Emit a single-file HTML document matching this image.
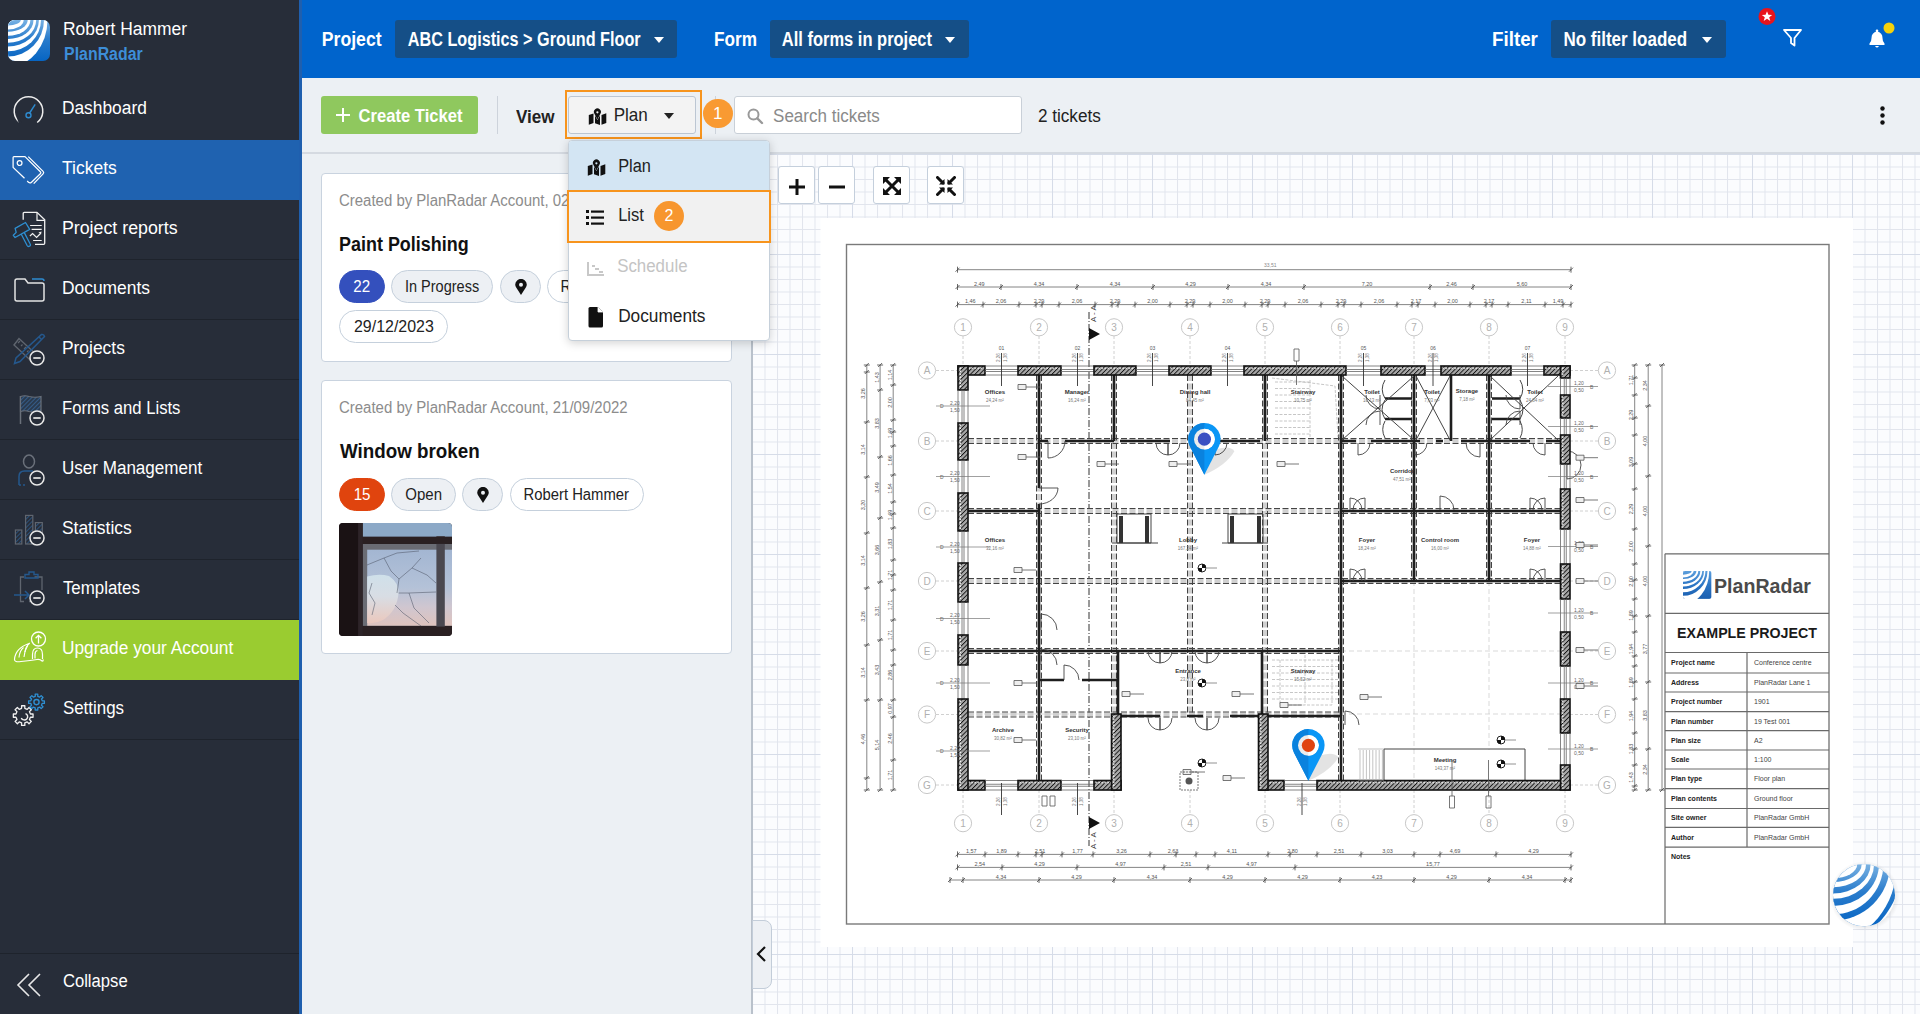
<!DOCTYPE html>
<html><head><meta charset="utf-8">
<style>
*{box-sizing:border-box;margin:0;padding:0}
html,body{width:1920px;height:1014px;overflow:hidden;font-family:"Liberation Sans",sans-serif;background:#ecf0f4}
.abs{position:absolute}
#sb{position:absolute;left:0;top:0;width:299px;height:1014px;background:#272d39}
#sbline{position:absolute;left:299px;top:0;width:3px;height:1014px;background:#1f5fae}
.item{position:absolute;left:0;width:299px;height:60px;border-bottom:1px solid #1e232c;color:#fff;font-size:18px}
.item .t{position:absolute;left:62px;top:18px;white-space:nowrap}
.item svg{position:absolute;left:10px;top:10px}
#top{position:absolute;left:302px;top:0;width:1618px;height:78px;background:#0064cc}
.tl{position:absolute;color:#fff;font-weight:bold;font-size:20px;white-space:nowrap}
.dd{position:absolute;top:20px;height:38px;background:#154f87;border-radius:3px;color:#fff;font-weight:bold;font-size:20px;white-space:nowrap}
.caret{position:absolute;width:0;height:0;border-left:5.5px solid transparent;border-right:5.5px solid transparent;border-top:6px solid #fff}
#tb{position:absolute;left:302px;top:78px;width:1618px;height:76px;background:#ecf0f4;border-bottom:2px solid #d5dae1}
#left{position:absolute;left:302px;top:154px;width:450px;height:860px;background:#ecf0f4}
#plan{position:absolute;left:751px;top:154px;width:1169px;height:860px;background-color:#fdfeff;border-left:2px solid #b9c1cb;overflow:hidden}
.card{position:absolute;left:321px;width:411px;background:#fff;border:1px solid #c9d3df;border-radius:4px}
.chip{position:absolute;height:33px;border-radius:17px;border:1px solid #c5d0dc;background:#edf0f4;font-size:15px;color:#222;text-align:center;line-height:31px;white-space:nowrap}
.zb{position:absolute;top:166px;width:37px;height:38px;background:#fff;border:1px solid #c4cfdc;border-radius:3px}
</style></head><body>
<!-- SIDEBAR -->

<div id="sb">
 <svg class="abs" style="left:8px;top:20px" width="42" height="41" viewBox="0 0 42 41">
  <defs><clipPath id="lg"><rect x="0" y="0" width="42" height="41" rx="7"/></clipPath>
  <linearGradient id="lgg" gradientUnits="userSpaceOnUse" x1="0" y1="0" x2="0" y2="41"><stop offset="0" stop-color="#78b2e4"/><stop offset="0.45" stop-color="#2a7ccc"/><stop offset="1" stop-color="#0765c3"/></linearGradient></defs>
  <g clip-path="url(#lg)"><rect width="42" height="41" fill="url(#lgg)"/><ellipse cx="0" cy="0" rx="39.5" ry="47" fill="#fff"/><ellipse cx="0" cy="0" rx="36" ry="36.5" fill="url(#lgg)"/><ellipse cx="0" cy="0" rx="33" ry="31.3" fill="#fff"/><ellipse cx="0" cy="0" rx="30.9" ry="26.5" fill="url(#lgg)"/><ellipse cx="0" cy="0" rx="28.2" ry="22.8" fill="#fff"/><ellipse cx="0" cy="0" rx="25.5" ry="19" fill="url(#lgg)"/><ellipse cx="0" cy="0" rx="22.4" ry="15.8" fill="#fff"/><ellipse cx="0" cy="0" rx="19.7" ry="11.7" fill="url(#lgg)"/><ellipse cx="0" cy="0" rx="15.7" ry="9.4" fill="#fff"/><ellipse cx="0" cy="0" rx="12.8" ry="5.4" fill="url(#lgg)"/></g></svg>
 <div class="abs" style="transform:translateX(-0.97px) scaleX(0.9678);transform-origin:0 0;left:64px;top:19px;color:#fff;font-size:18px;white-space:nowrap;line-height:20px" id="t_rh">Robert Hammer</div>
 <div class="abs" style="transform:translateX(0.10px) scaleX(0.8821);transform-origin:0 0;left:64px;top:44px;color:#3d8ed8;font-size:18px;font-weight:bold;white-space:nowrap;line-height:20px" id="t_pr">PlanRadar</div>

 <div class="item" style="top:80px;border-bottom:none">
  <svg width="40" height="40" viewBox="0 0 40 40" style="left:9px;top:10px"><path d="M10.8 32.5 A14.3 14.3 0 1 1 28.2 32.5" fill="none" stroke="#ececec" stroke-width="1.5"/><path d="M9.8 21.5 A14.3 14.3 0 0 0 11.3 32.8" fill="none" stroke="#272d39" stroke-width="2.5" stroke-dasharray="0 0"/><line x1="20.3" y1="23.5" x2="26.2" y2="14.3" stroke="#2e8bd0" stroke-width="1.4"/><circle cx="19.5" cy="25.2" r="2.5" fill="none" stroke="#2e8bd0" stroke-width="1.4"/></svg>
  <div style="transform:translateX(-0.07px) scaleX(0.9645);transform-origin:0 0;" class="t" id="t_dash">Dashboard</div></div>
 <div class="item" style="top:140px;background:#1f62b0;border-bottom:none">
  <svg width="40" height="40" viewBox="0 0 40 40" style="left:9px;top:10px"><path d="M18.2 31 L19.5 32.3 Q21 33.6 22.5 32.2 L31.3 23.8 Q32.4 22.8 31.3 21.7 L16 6.6 H5 Q4.1 6.6 4.1 7.5 V17.4 L15.5 28.3" fill="none" stroke="#fff" stroke-width="1.25" stroke-linejoin="round"/><path d="M19.3 6.6 L34.1 21.4 Q35.3 22.7 34.1 23.9 L24.7 33.6" fill="none" stroke="#fff" stroke-width="1.25"/><circle cx="10.6" cy="13.1" r="2.4" fill="none" stroke="#fff" stroke-width="1.2"/></svg>
  <div style="transform:translateX(0.09px) scaleX(0.9700);transform-origin:0 0;" class="t" id="t_tick">Tickets</div></div>
 <div class="item" style="top:200px">
  <svg width="40" height="40" viewBox="0 0 40 40" style="left:9px;top:10px"><path d="M14.2 9.8 V3.5 Q14.2 2.4 15.3 2.4 H28 L35.7 9.8 V33.3 Q35.7 34.4 34.6 34.4 H26" fill="none" stroke="#f2f2f2" stroke-width="1.3" stroke-linejoin="round"/><path d="M28 2.4 V10.3 H35.7" fill="none" stroke="#f2f2f2" stroke-width="1.2"/><path d="M21.1 15.5 H32.7 M22.6 19.4 H32.7 M24.1 30.5 H32.7 M20.9 26 L23.6 23.6 L27.6 27.5 L31 24" fill="none" stroke="#f2f2f2" stroke-width="1.2"/><path d="M29.5 22.5 L32.5 21.5 L32 24.8Z" fill="#f2f2f2"/><path d="M6.1 18.4 L16.5 12.5 L20.7 19.4 L6.1 27.5 L4.3 25.3 L7.2 22.4Z" fill="none" stroke="#2e8fd2" stroke-width="1.3" stroke-linejoin="round"/><path d="M12.3 24.2 L18.1 35.5 Q19 37 20.5 36.2 Q22 35.4 21.2 34 L15.3 22.6" fill="none" stroke="#2e8fd2" stroke-width="1.3"/></svg>
  <div style="transform:translateX(-0.10px) scaleX(0.9889);transform-origin:0 0;" class="t" id="t_prep">Project reports</div></div>
 <div class="item" style="top:260px">
  <svg width="40" height="40" viewBox="0 0 40 40" style="left:9px;top:10px"><path d="M6 18 L6 11 Q6 9 8 9 L16 9 L19 13 L33 13 Q35 13 35 15 L35 29 Q35 31 33 31 L8 31 Q6 31 6 29Z" fill="none" stroke="#e4e4e4" stroke-width="1.5"/><path d="M23 9 L33 9 Q35 9 35 11" fill="none" stroke="#2e8bd0" stroke-width="1.5"/></svg>
  <div style="transform:translateX(-0.08px) scaleX(0.9679);transform-origin:0 0;" class="t" id="t_docs">Documents</div></div>
 <div class="item" style="top:320px">
  <svg width="40" height="40" viewBox="0 0 40 40" style="left:9px;top:10px"><path d="M5 15 L10 8.5 L31 28 L26 34.5Z" fill="none" stroke="#5f656f" stroke-width="1.4"/><path d="M9 13 l2 -2 M12 16 l1.5 -1.5 M15 19 l2 -2 M18 22 l1.5 -1.5 M21 25 l2 -2" stroke="#5f656f" stroke-width="1.1"/><path d="M32.5 4.5 Q35 4 35.5 6.5 L11 31.5 L5.5 33.5 L7 28Z M30 7 L33 10" fill="none" stroke="#25588d" stroke-width="1.5"/><circle cx="28" cy="28" r="7" fill="#272d39" stroke="#e8e8e8" stroke-width="1.5"/><line x1="24.3" y1="28" x2="31.7" y2="28" stroke="#e8e8e8" stroke-width="1.7"/></svg>
  <div style="transform:translateX(-0.08px) scaleX(0.9676);transform-origin:0 0;" class="t" id="t_proj">Projects</div></div>
 <div class="item" style="top:380px">
  <svg width="40" height="40" viewBox="0 0 40 40" style="left:9px;top:10px"><defs><pattern id="fh" width="3" height="3" patternUnits="userSpaceOnUse" patternTransform="rotate(45)"><rect width="3" height="3" fill="#2a3a4e"/><path d="M0 0 V3" stroke="#3b6ea8" stroke-width="1.3"/></pattern></defs><line x1="11.5" y1="6" x2="11.5" y2="34" stroke="#6a707a" stroke-width="1.5"/><path d="M11.5 6.5 Q16 5 20 6.5 Q26 8 32 6.5 L32 21.5 Q26 23 20 21.5 Q16 20 11.5 21.5Z" fill="url(#fh)" stroke="#6a707a" stroke-width="1.2"/><circle cx="28" cy="28" r="7" fill="#272d39" stroke="#e8e8e8" stroke-width="1.5"/><line x1="24.3" y1="28" x2="31.7" y2="28" stroke="#e8e8e8" stroke-width="1.7"/></svg>
  <div style="transform:translateX(-0.03px) scaleX(0.9252);transform-origin:0 0;" class="t" id="t_forms">Forms and Lists</div></div>
 <div class="item" style="top:440px">
  <svg width="40" height="40" viewBox="0 0 40 40" style="left:9px;top:10px"><ellipse cx="20" cy="11.5" rx="5.5" ry="6.5" fill="none" stroke="#6a707a" stroke-width="1.5"/><path d="M10 35 V26.5 Q10 21 15.5 21 H24" fill="none" stroke="#25588d" stroke-width="1.5"/><path d="M10 35 H16" stroke="#25588d" stroke-width="1.5" stroke-dasharray="2 2"/><circle cx="28" cy="28" r="7" fill="#272d39" stroke="#e8e8e8" stroke-width="1.5"/><line x1="24.3" y1="28" x2="31.7" y2="28" stroke="#e8e8e8" stroke-width="1.7"/></svg>
  <div style="transform:translateX(-0.05px) scaleX(0.9473);transform-origin:0 0;" class="t" id="t_user">User Management</div></div>
 <div class="item" style="top:500px">
  <svg width="40" height="40" viewBox="0 0 40 40" style="left:9px;top:10px"><defs><pattern id="sh" width="3" height="3" patternUnits="userSpaceOnUse" patternTransform="rotate(45)"><rect width="3" height="3" fill="#272d39"/><path d="M0 0 V3" stroke="#2f6aa6" stroke-width="1.2"/></pattern></defs><rect x="6.4" y="20" width="6.4" height="14" fill="url(#sh)" stroke="#5f656f" stroke-width="1.2"/><rect x="16.6" y="5.4" width="7.2" height="28.6" fill="url(#sh)" stroke="#5f656f" stroke-width="1.2"/><rect x="26.4" y="12.6" width="6.9" height="12" fill="url(#sh)" stroke="#5f656f" stroke-width="1.2"/><circle cx="28" cy="28" r="7" fill="#272d39" stroke="#e8e8e8" stroke-width="1.5"/><line x1="24.3" y1="28" x2="31.7" y2="28" stroke="#e8e8e8" stroke-width="1.7"/></svg>
  <div style="transform:translateX(-0.11px) scaleX(0.9696);transform-origin:0 0;" class="t" id="t_stat">Statistics</div></div>
 <div class="item" style="top:560px">
  <svg width="40" height="40" viewBox="0 0 40 40" style="left:9px;top:10px"><path d="M15 7 H11.5 V31.5 H15 M20 31.5 H22 M25.5 7 H33 V20" fill="none" stroke="#5f656f" stroke-width="1.3"/><path d="M16 8 V4.5 H20 V2 H25 V4.5 H29 V8Z" fill="none" stroke="#25588d" stroke-width="1.4"/><path d="M5 25 H20 M16 21 L20 25 L16 29" fill="none" stroke="#25588d" stroke-width="1.5"/><circle cx="28" cy="28" r="7" fill="#272d39" stroke="#e8e8e8" stroke-width="1.5"/><line x1="24.3" y1="28" x2="31.7" y2="28" stroke="#e8e8e8" stroke-width="1.7"/></svg>
  <div style="transform:translateX(0.88px) scaleX(0.9382);transform-origin:0 0;" class="t" id="t_templ">Templates</div></div>
 <div class="item" style="top:620px;background:#9acc30;border-bottom:none">
  <svg width="40" height="40" viewBox="0 0 40 40" style="left:9px;top:10px"><path d="M5.5 29.5 C6 22 10 17 20.5 13.3 Q16.5 17 16 22 M5.5 29.5 Q5.5 32.5 12 31.5 Q22 30.5 28 29.5 Q31 29 33 31 Q34.5 31.5 34 29.5" fill="none" stroke="#fff" stroke-width="1.2" stroke-linejoin="round"/><path d="M10 27.5 Q10.5 21 14.5 17.5 M15 27 Q15.5 20.5 18.5 16" fill="none" stroke="#fff" stroke-width="1.1"/><path d="M23.5 29 V24.5 Q23.5 18 28.5 18 Q33.5 18 33.5 24.5 V29 M26 28.5 V24.5 Q26 21 28.5 20.5" fill="none" stroke="#fff" stroke-width="1.2"/><circle cx="29.5" cy="9" r="7" fill="#9acc30" stroke="#fff" stroke-width="1.3"/><path d="M29.5 13.5 V5.3 M26.6 8.2 L29.5 5.3 L32.4 8.2" fill="none" stroke="#fff" stroke-width="1.3"/></svg>
  <div style="transform:translateX(-0.07px) scaleX(0.9622);transform-origin:0 0;" class="t" id="t_upg">Upgrade your Account</div></div>
 <div class="item" style="top:680px">
  <svg width="40" height="40" viewBox="0 0 40 40" style="left:9px;top:10px"><path d="M21.43 24.01 L24.06 23.96 L24.06 27.24 L21.43 27.19 L20.43 29.59 L22.34 31.41 L20.01 33.74 L18.19 31.83 L15.79 32.83 L15.84 35.46 L12.56 35.46 L12.61 32.83 L10.21 31.83 L8.39 33.74 L6.06 31.41 L7.97 29.59 L6.97 27.19 L4.34 27.24 L4.34 23.96 L6.97 24.01 L7.97 21.61 L6.06 19.79 L8.39 17.46 L10.21 19.37 L12.61 18.37 L12.56 15.74 L15.84 15.74 L15.79 18.37 L18.19 19.37 L20.01 17.46 L22.34 19.79 L20.43 21.61Z" fill="none" stroke="#f0f0f0" stroke-width="1.3" stroke-linejoin="round"/><path d="M16.5 23.6 A3.3 3.3 0 1 1 12.3 27.9" fill="none" stroke="#f0f0f0" stroke-width="1.4"/><path d="M33.26 10.84 L35.39 10.79 L35.39 13.41 L33.26 13.36 L32.47 15.28 L34.01 16.75 L32.15 18.61 L30.68 17.07 L28.76 17.86 L28.81 19.99 L26.19 19.99 L26.24 17.86 L24.32 17.07 L22.85 18.61 L20.99 16.75 L22.53 15.28 L21.74 13.36 L19.61 13.41 L19.61 10.79 L21.74 10.84 L22.53 8.92 L20.99 7.45 L22.85 5.59 L24.32 7.13 L26.24 6.34 L26.19 4.21 L28.81 4.21 L28.76 6.34 L30.68 7.13 L32.15 5.59 L34.01 7.45 L32.47 8.92Z" fill="none" stroke="#2e8fd2" stroke-width="1.3" stroke-linejoin="round"/><circle cx="27.5" cy="12.1" r="2.6" fill="none" stroke="#2e8fd2" stroke-width="1.4"/></svg>
  <div style="transform:translateX(0.89px) scaleX(0.9402);transform-origin:0 0;" class="t" id="t_set">Settings</div></div>
 <div class="abs" style="left:0;top:953px;width:299px;height:1px;background:#1e232c"></div>
 <svg class="abs" style="left:15px;top:970.5px" width="30" height="30" viewBox="0 0 30 30"><path d="M14 3 L3 14 L14 25 M25 3 L14 14 L25 25" fill="none" stroke="#e8e8e8" stroke-width="1.6"/></svg>
 <div class="abs" style="transform:translateX(0.89px) scaleX(0.9244);transform-origin:0 0;left:62px;top:971px;color:#fff;font-size:18px;line-height:20px;white-space:nowrap" id="t_coll">Collapse</div>
</div>

<div id="sbline"></div>

<div id="top"></div>
<div class="tl" style="transform:translateX(-1.27px) scaleX(0.8833);transform-origin:0 0;left:323px;top:28px;line-height:22px" id="t_project">Project</div>
<div class="dd" style="left:395px;width:282px"><span class="abs" style="transform:translateX(0.81px) scaleX(0.8105);transform-origin:0 0;left:12px;top:8px;line-height:22px" id="t_abc">ABC Logistics &gt; Ground Floor</span><div class="caret" style="left:259px;top:17px"></div></div>
<div class="tl" style="transform:translateX(0.01px) scaleX(0.8590);transform-origin:0 0;left:714px;top:28px;line-height:22px" id="t_form">Form</div>
<div class="dd" style="left:770px;width:199px"><span class="abs" style="transform:translateX(-0.19px) scaleX(0.8242);transform-origin:0 0;left:12px;top:8px;line-height:22px" id="t_allf">All forms in project</span><div class="caret" style="left:175px;top:17px"></div></div>
<div class="tl" style="transform:translateX(-0.94px) scaleX(0.9366);transform-origin:0 0;left:1493px;top:28px;line-height:22px" id="t_filter">Filter</div>
<div class="dd" style="left:1551px;width:175px"><span class="abs" style="transform:translateX(0.38px) scaleX(0.8502);transform-origin:0 0;left:12px;top:8px;line-height:22px" id="t_nofil">No filter loaded</span><div class="caret" style="left:151px;top:17px"></div></div>
<svg class="abs" style="left:1757px;top:6px" width="22" height="22" viewBox="0 0 22 22"><circle cx="10" cy="10.5" r="8.5" fill="#e8141c"/><path d="M10 5.2 L11.4 8.8 L15.2 8.9 L12.2 11.2 L13.3 14.9 L10 12.7 L6.7 14.9 L7.8 11.2 L4.8 8.9 L8.6 8.8Z" fill="#fff"/></svg>
<svg class="abs" style="left:1782px;top:28px" width="22" height="20" viewBox="0 0 22 20"><path d="M2 2 L19 2 L12.5 10 L12.5 17.5 L9 15 L9 10Z" fill="none" stroke="#fff" stroke-width="1.8" stroke-linejoin="round"/></svg>
<svg class="abs" style="left:1866px;top:28px" width="22" height="22" viewBox="0 0 22 22"><path d="M3.5 17 L3.5 15.5 Q5.5 14 5.5 10 Q5.5 4.5 11 3.5 Q16.5 4.5 16.5 10 Q16.5 14 18.5 15.5 L18.5 17Z" fill="#fff"/><path d="M9 18 Q11 21 13 18Z" fill="#fff"/><rect x="9.8" y="1.5" width="2.4" height="3" rx="1" fill="#fff"/></svg>
<svg class="abs" style="left:1882px;top:21px" width="14" height="14"><circle cx="7" cy="7" r="5.5" fill="#f5d20c"/></svg>


<div id="tb"></div>
<div class="abs" style="left:321px;top:96px;width:157px;height:38px;background:#8fc85e;border-radius:3px;color:#fff;font-weight:bold;font-size:19px;white-space:nowrap">
 <svg class="abs" style="left:14px;top:11px" width="16" height="16"><path d="M8 1 V15 M1 8 H15" stroke="#fff" stroke-width="2"/></svg>
 <span class="abs" style="transform:translateX(-0.41px) scaleX(0.8726);transform-origin:0 0;left:38px;top:9px;line-height:22px" id="t_ct">Create Ticket</span></div>
<div class="abs" style="left:497px;top:96px;width:1px;height:38px;background:#cdd3db"></div>
<div class="abs" style="transform:translateX(0.00px) scaleX(0.8982);transform-origin:0 0;left:516px;top:106px;color:#222;font-weight:bold;font-size:19px;line-height:22px" id="t_view">View</div>
<div class="abs" style="left:565px;top:90px;width:137px;height:49px;border:2px solid #f7941d"></div>
<div class="abs" style="left:568px;top:96px;width:128px;height:38px;background:#f3f3f3;border:1px solid #bcc6d2;border-radius:3px">
 <svg class="abs" style="left:19px;top:11px" width="20" height="18" viewBox="0 0 20 18"><path d="M0.8 7 L5.5 5.5 L5.5 14.9 L0.8 16.7Z M13.5 7 L18.3 5.2 L18.3 14.9 L13.5 16.7Z M7 7.5 L9.4 12 L12 7.5 L12 16.9 L7 15.2Z" fill="#111"/><path d="M9.4 11.4 L6.4 5.8 A3.5 3.5 0 1 1 12.4 5.8Z" fill="#111"/><circle cx="9.4" cy="4.3" r="1.1" fill="#f3f3f3"/></svg>
 <span class="abs" style="transform:translateX(-1.31px) scaleX(0.8981);transform-origin:0 0;left:46px;top:7px;font-size:19px;line-height:22px;color:#222" id="t_planbtn">Plan</span>
 <div class="caret" style="left:95px;top:16px;border-top-color:#222"></div></div>
<div class="abs" style="left:715px;top:96px;width:1px;height:38px;background:#cdd3db"></div>
<div class="abs" style="left:703px;top:98.5px;width:29.6px;height:29.6px;border-radius:50%;background:#f99a32;color:#fff;font-size:17px;text-align:center;line-height:30px">1</div>
<div class="abs" style="left:734px;top:96px;width:288px;height:38px;background:#fff;border:1px solid #c9d0d8;border-radius:3px">
 <svg class="abs" style="left:12px;top:11px" width="17" height="17" viewBox="0 0 17 17"><circle cx="6.5" cy="6.5" r="5" fill="none" stroke="#999" stroke-width="2"/><path d="M10.3 10.3 L15 15" stroke="#999" stroke-width="2.4" stroke-linecap="round"/></svg>
 <span class="abs" style="transform:translateX(0.05px) scaleX(0.9447);transform-origin:0 0;left:38px;top:8px;font-size:18px;line-height:22px;color:#8a8a8a" id="t_search">Search tickets</span></div>
<div class="abs" style="transform:translateX(0.89px) scaleX(0.9527);transform-origin:0 0;left:1037px;top:105px;font-size:18px;line-height:22px;color:#222" id="t_2t">2 tickets</div>
<svg class="abs" style="left:1876px;top:104px" width="12" height="24"><circle cx="6.5" cy="4.5" r="2.2" fill="#111"/><circle cx="6.5" cy="11.5" r="2.2" fill="#111"/><circle cx="6.5" cy="18.5" r="2.2" fill="#111"/></svg>


<div id="left"></div>
<div class="card" style="top:173px;height:189px">
 <div class="abs" style="transform:translateX(0.00px) scaleX(0.9351);transform-origin:0 0;left:17px;top:18px;font-size:16px;line-height:18px;color:#8c8c8c;white-space:nowrap" id="t_cb1">Created by PlanRadar Account, 02/10/2023</div>
 <div class="abs" style="transform:translateX(0.00px) scaleX(0.8979);transform-origin:0 0;left:17px;top:59px;font-size:20px;line-height:22px;color:#111;font-weight:bold;white-space:nowrap" id="t_pp">Paint Polishing</div>
 <div class="chip" style="left:17px;top:96px;width:46px;background:#3450bd;border-color:#3450bd;color:#fff"><span class="abs" id="t_c22" style="transform:translateX(13.34px) scaleX(0.9464);transform-origin:0 0;left:0;top:7px;font-size:16px;line-height:18px;white-space:nowrap">22</span></div>
 <div class="chip" style="left:69px;top:96px;width:102px"><span class="abs" id="t_cinp" style="transform:translateX(12.97px) scaleX(0.9065);transform-origin:0 0;left:0;top:7px;font-size:16px;line-height:18px;white-space:nowrap">In Progress</span></div>
 <div class="chip" style="left:178px;top:96px;width:41px"><svg class="abs" style="left:13px;top:8px" width="14" height="17" viewBox="0 0 14 17"><path d="M7 16 L2.2 8.5 A5.6 5.6 0 1 1 11.8 8.5Z" fill="#111"/><circle cx="7" cy="5.8" r="2" fill="#edf0f4"/></svg></div>
 <div class="chip" style="left:225px;top:96px;width:134px;background:#fff"><span class="abs" id="t_crh1" style="transform:translateX(12.51px) scaleX(0.9271);transform-origin:0 0;left:0;top:7px;font-size:16px;line-height:18px;white-space:nowrap">Robert Hammer</span></div>
 <div class="chip" style="left:17px;top:136px;width:109px;background:#fff"><span class="abs" id="t_cdate" style="transform:translateX(13.99px) scaleX(0.9964);transform-origin:0 0;left:0;top:7px;font-size:16px;line-height:18px;white-space:nowrap">29/12/2023</span></div>
</div>
<div class="card" style="top:380px;height:274px">
 <div class="abs" style="transform:translateX(0.00px) scaleX(0.9351);transform-origin:0 0;left:17px;top:18px;font-size:16px;line-height:18px;color:#8c8c8c;white-space:nowrap" id="t_cb2">Created by PlanRadar Account, 21/09/2022</div>
 <div class="abs" style="transform:translateX(0.94px) scaleX(0.9396);transform-origin:0 0;left:17px;top:59px;font-size:20px;line-height:22px;color:#111;font-weight:bold;white-space:nowrap" id="t_wb">Window broken</div>
 <div class="chip" style="left:17px;top:97px;width:46px;background:#e0440e;border-color:#e0440e;color:#fff"><span class="abs" id="t_c15" style="transform:translateX(13.67px) scaleX(0.9464);transform-origin:0 0;left:0;top:7px;font-size:16px;line-height:18px;white-space:nowrap">15</span></div>
 <div class="chip" style="left:69px;top:97px;width:65px"><span class="abs" id="t_copen" style="transform:translateX(13.36px) scaleX(0.9371);transform-origin:0 0;left:0;top:7px;font-size:16px;line-height:18px;white-space:nowrap">Open</span></div>
 <div class="chip" style="left:140px;top:97px;width:41px"><svg class="abs" style="left:13px;top:8px" width="14" height="17" viewBox="0 0 14 17"><path d="M7 16 L2.2 8.5 A5.6 5.6 0 1 1 11.8 8.5Z" fill="#111"/><circle cx="7" cy="5.8" r="2" fill="#edf0f4"/></svg></div>
 <div class="chip" style="left:188px;top:97px;width:134px;background:#fff"><span class="abs" id="t_crh2" style="transform:translateX(12.51px) scaleX(0.9271);transform-origin:0 0;left:0;top:7px;font-size:16px;line-height:18px;white-space:nowrap">Robert Hammer</span></div>
 <svg class="abs" style="left:17px;top:142px" width="113" height="113" viewBox="0 0 113 113">
  <defs><clipPath id="ic"><rect width="113" height="113" rx="4"/></clipPath>
  <linearGradient id="gl" x1="0" y1="0" x2="0" y2="1"><stop offset="0" stop-color="#a3b6d2"/><stop offset="0.5" stop-color="#b4c2d8"/><stop offset="0.75" stop-color="#cfc6d0"/><stop offset="1" stop-color="#dfc3bd"/></linearGradient>
  <linearGradient id="hole" x1="0" y1="0" x2="0" y2="1"><stop offset="0" stop-color="#cfe0ea"/><stop offset="0.45" stop-color="#d8dde4"/><stop offset="1" stop-color="#ebc8bd"/></linearGradient></defs>
  <g clip-path="url(#ic)">
   <rect width="113" height="113" fill="#2a2124"/>
   <rect x="23.7" y="0" width="90" height="13.8" fill="#8ca9c7"/>
   <rect x="23.7" y="20.9" width="90" height="82" fill="#6a6c74"/>
   <rect x="28.2" y="26.7" width="85" height="76" fill="url(#gl)"/>
   <path d="M28.2 53.6 Q40 50 50 53 Q60 60 59.6 70 Q58 88 44 97 Q36 101 28.2 100Z" fill="url(#hole)"/>
   <g stroke="#4e5566" stroke-width="0.6" fill="none" opacity="0.9"><path d="M28 42 L45 35 L58 30 L80 28 M45 35 L52 48 L60 56 L73 45 L82 35 M60 56 L58 70 M59.6 70 L70 70 L97 69 M70 70 L75 85 L90 100 M56 82 L64 90 L82 103 M73 45 L88 52 L97 60 M33 60 L30 70 L36 80 L33 92"/></g>
   <rect x="97.4" y="13" width="8.4" height="91" fill="#4a4850"/>
   <rect x="19" y="13.8" width="94" height="7.1" fill="#2a2022"/>
   <rect x="19" y="103.6" width="94" height="10" fill="#2a2022"/>
   <rect x="0" y="0" width="19.2" height="113" fill="#1a1214"/>
   <rect x="19.2" y="0" width="4.5" height="113" fill="#2d2428"/>
  </g>
 </svg>
</div>


<div id="plan"></div>
<svg class="abs" style="left:0;top:0" width="1920" height="1014" viewBox="0 0 1920 1014" font-family="Liberation Sans, sans-serif"><defs><pattern id="gmin" x="752" y="4" width="12.5" height="12.5" patternUnits="userSpaceOnUse"><path d="M0 0.5 H12.5 M0.5 0 V12.5" fill="none" stroke="#e1e5ed" stroke-width="1"/></pattern><pattern id="gmaj" x="852" y="54" width="100" height="100" patternUnits="userSpaceOnUse"><path d="M0 0.5 H100 M0.5 0 V100" fill="none" stroke="#d6dce8" stroke-width="1"/></pattern><pattern id="hat" width="3.2" height="3.2" patternUnits="userSpaceOnUse" patternTransform="rotate(45)"><rect width="3.2" height="3.2" fill="#a8a8a8"/><path d="M0 0 V3.2" stroke="#111" stroke-width="1.8"/></pattern></defs><rect x="753" y="154" width="1167" height="860" fill="#fbfcfe"/><rect x="753" y="154" width="1167" height="860" fill="url(#gmin)"/><rect x="753" y="154" width="1167" height="860" fill="url(#gmaj)"/><rect x="820.5" y="218" width="1032.5" height="729" fill="#fff"/><rect x="846.5" y="244.5" width="982.5" height="679.5" fill="none" stroke="#7a7a7a" stroke-width="1.4"/><path d="M963 336 V366 M963 790 V814 M1039 336 V366 M1039 790 V814 M1114 336 V366 M1114 790 V814 M1190 336 V366 M1190 790 V814 M1265 336 V366 M1265 790 V814 M1340 336 V366 M1340 790 V814 M1414 336 V366 M1414 790 V814 M1489 336 V366 M1489 790 V814 M1565 336 V366 M1565 790 V814 M936 370.5 H958 M1570 370.5 H1598 M936 441 H958 M1570 441 H1598 M936 511 H958 M1570 511 H1598 M936 581 H958 M1570 581 H1598 M936 651 H958 M1570 651 H1598 M936 714.5 H958 M1570 714.5 H1598 M936 785 H958 M1570 785 H1598" stroke="#c4c4c4" stroke-width="0.8" stroke-dasharray="3 2" fill="none"/><path d="M1341 651 H1560 M1414 581 V780 M1489 581 V750 M1341 714 H1560 M968 714 H1118" stroke="#cfcfcf" stroke-width="0.8" stroke-dasharray="5 3" fill="none"/><circle cx="963" cy="327.3" r="8.6" fill="#fff" stroke="#c8c8c8" stroke-width="1"/><text x="963" y="330.90000000000003" font-size="10" fill="#b0b0b0" text-anchor="middle">1</text><circle cx="963" cy="823.2" r="8.6" fill="#fff" stroke="#c8c8c8" stroke-width="1"/><text x="963" y="826.8000000000001" font-size="10" fill="#b0b0b0" text-anchor="middle">1</text><circle cx="1039" cy="327.3" r="8.6" fill="#fff" stroke="#c8c8c8" stroke-width="1"/><text x="1039" y="330.90000000000003" font-size="10" fill="#b0b0b0" text-anchor="middle">2</text><circle cx="1039" cy="823.2" r="8.6" fill="#fff" stroke="#c8c8c8" stroke-width="1"/><text x="1039" y="826.8000000000001" font-size="10" fill="#b0b0b0" text-anchor="middle">2</text><circle cx="1114" cy="327.3" r="8.6" fill="#fff" stroke="#c8c8c8" stroke-width="1"/><text x="1114" y="330.90000000000003" font-size="10" fill="#b0b0b0" text-anchor="middle">3</text><circle cx="1114" cy="823.2" r="8.6" fill="#fff" stroke="#c8c8c8" stroke-width="1"/><text x="1114" y="826.8000000000001" font-size="10" fill="#b0b0b0" text-anchor="middle">3</text><circle cx="1190" cy="327.3" r="8.6" fill="#fff" stroke="#c8c8c8" stroke-width="1"/><text x="1190" y="330.90000000000003" font-size="10" fill="#b0b0b0" text-anchor="middle">4</text><circle cx="1190" cy="823.2" r="8.6" fill="#fff" stroke="#c8c8c8" stroke-width="1"/><text x="1190" y="826.8000000000001" font-size="10" fill="#b0b0b0" text-anchor="middle">4</text><circle cx="1265" cy="327.3" r="8.6" fill="#fff" stroke="#c8c8c8" stroke-width="1"/><text x="1265" y="330.90000000000003" font-size="10" fill="#b0b0b0" text-anchor="middle">5</text><circle cx="1265" cy="823.2" r="8.6" fill="#fff" stroke="#c8c8c8" stroke-width="1"/><text x="1265" y="826.8000000000001" font-size="10" fill="#b0b0b0" text-anchor="middle">5</text><circle cx="1340" cy="327.3" r="8.6" fill="#fff" stroke="#c8c8c8" stroke-width="1"/><text x="1340" y="330.90000000000003" font-size="10" fill="#b0b0b0" text-anchor="middle">6</text><circle cx="1340" cy="823.2" r="8.6" fill="#fff" stroke="#c8c8c8" stroke-width="1"/><text x="1340" y="826.8000000000001" font-size="10" fill="#b0b0b0" text-anchor="middle">6</text><circle cx="1414" cy="327.3" r="8.6" fill="#fff" stroke="#c8c8c8" stroke-width="1"/><text x="1414" y="330.90000000000003" font-size="10" fill="#b0b0b0" text-anchor="middle">7</text><circle cx="1414" cy="823.2" r="8.6" fill="#fff" stroke="#c8c8c8" stroke-width="1"/><text x="1414" y="826.8000000000001" font-size="10" fill="#b0b0b0" text-anchor="middle">7</text><circle cx="1489" cy="327.3" r="8.6" fill="#fff" stroke="#c8c8c8" stroke-width="1"/><text x="1489" y="330.90000000000003" font-size="10" fill="#b0b0b0" text-anchor="middle">8</text><circle cx="1489" cy="823.2" r="8.6" fill="#fff" stroke="#c8c8c8" stroke-width="1"/><text x="1489" y="826.8000000000001" font-size="10" fill="#b0b0b0" text-anchor="middle">8</text><circle cx="1565" cy="327.3" r="8.6" fill="#fff" stroke="#c8c8c8" stroke-width="1"/><text x="1565" y="330.90000000000003" font-size="10" fill="#b0b0b0" text-anchor="middle">9</text><circle cx="1565" cy="823.2" r="8.6" fill="#fff" stroke="#c8c8c8" stroke-width="1"/><text x="1565" y="826.8000000000001" font-size="10" fill="#b0b0b0" text-anchor="middle">9</text><circle cx="927" cy="370.5" r="8.6" fill="#fff" stroke="#c8c8c8" stroke-width="1"/><text x="927" y="374.1" font-size="10" fill="#b0b0b0" text-anchor="middle">A</text><circle cx="1607" cy="370.5" r="8.6" fill="#fff" stroke="#c8c8c8" stroke-width="1"/><text x="1607" y="374.1" font-size="10" fill="#b0b0b0" text-anchor="middle">A</text><circle cx="927" cy="441" r="8.6" fill="#fff" stroke="#c8c8c8" stroke-width="1"/><text x="927" y="444.6" font-size="10" fill="#b0b0b0" text-anchor="middle">B</text><circle cx="1607" cy="441" r="8.6" fill="#fff" stroke="#c8c8c8" stroke-width="1"/><text x="1607" y="444.6" font-size="10" fill="#b0b0b0" text-anchor="middle">B</text><circle cx="927" cy="511" r="8.6" fill="#fff" stroke="#c8c8c8" stroke-width="1"/><text x="927" y="514.6" font-size="10" fill="#b0b0b0" text-anchor="middle">C</text><circle cx="1607" cy="511" r="8.6" fill="#fff" stroke="#c8c8c8" stroke-width="1"/><text x="1607" y="514.6" font-size="10" fill="#b0b0b0" text-anchor="middle">C</text><circle cx="927" cy="581" r="8.6" fill="#fff" stroke="#c8c8c8" stroke-width="1"/><text x="927" y="584.6" font-size="10" fill="#b0b0b0" text-anchor="middle">D</text><circle cx="1607" cy="581" r="8.6" fill="#fff" stroke="#c8c8c8" stroke-width="1"/><text x="1607" y="584.6" font-size="10" fill="#b0b0b0" text-anchor="middle">D</text><circle cx="927" cy="651" r="8.6" fill="#fff" stroke="#c8c8c8" stroke-width="1"/><text x="927" y="654.6" font-size="10" fill="#b0b0b0" text-anchor="middle">E</text><circle cx="1607" cy="651" r="8.6" fill="#fff" stroke="#c8c8c8" stroke-width="1"/><text x="1607" y="654.6" font-size="10" fill="#b0b0b0" text-anchor="middle">E</text><circle cx="927" cy="714.5" r="8.6" fill="#fff" stroke="#c8c8c8" stroke-width="1"/><text x="927" y="718.1" font-size="10" fill="#b0b0b0" text-anchor="middle">F</text><circle cx="1607" cy="714.5" r="8.6" fill="#fff" stroke="#c8c8c8" stroke-width="1"/><text x="1607" y="718.1" font-size="10" fill="#b0b0b0" text-anchor="middle">F</text><circle cx="927" cy="785" r="8.6" fill="#fff" stroke="#c8c8c8" stroke-width="1"/><text x="927" y="788.6" font-size="10" fill="#b0b0b0" text-anchor="middle">G</text><circle cx="1607" cy="785" r="8.6" fill="#fff" stroke="#c8c8c8" stroke-width="1"/><text x="1607" y="788.6" font-size="10" fill="#b0b0b0" text-anchor="middle">G</text><path d="M957.5 269.7 H1571 M957.5 287 H1571 M957.5 304.6 H1571 M957.5 854.4 H1571 M957.5 867.4 H1571 M950 880 H1571 M866.8 365 V790 M880.1 365 V790 M893.2 365 V790 M1634.7 365 V790 M1648.2 365 V790 M1662 365 V790" stroke="#666" stroke-width="0.8" fill="none"/><path d="M955.5 271.7 L959.5 267.7 M957.5 266.7 V272.7 M1569 271.7 L1573 267.7 M1571 266.7 V272.7 M955.5 289 L959.5 285 M957.5 284 V290 M999 289 L1003 285 M1001 284 V290 M1075 289 L1079 285 M1077 284 V290 M1151 289 L1155 285 M1153 284 V290 M1226 289 L1230 285 M1228 284 V290 M1302 289 L1306 285 M1304 284 V290 M1428 289 L1432 285 M1430 284 V290 M1471 289 L1475 285 M1473 284 V290 M1569 289 L1573 285 M1571 284 V290 M955.5 306.6 L959.5 302.6 M957.5 301.6 V307.6 M981 306.6 L985 302.6 M983 301.6 V307.6 M1017 306.6 L1021 302.6 M1019 301.6 V307.6 M1034 306.6 L1038 302.6 M1036 301.6 V307.6 M1040 306.6 L1044 302.6 M1042 301.6 V307.6 M1057 306.6 L1061 302.6 M1059 301.6 V307.6 M1093 306.6 L1097 302.6 M1095 301.6 V307.6 M1110 306.6 L1114 302.6 M1112 301.6 V307.6 M1116 306.6 L1120 302.6 M1118 301.6 V307.6 M1133 306.6 L1137 302.6 M1135 301.6 V307.6 M1168 306.6 L1172 302.6 M1170 301.6 V307.6 M1185 306.6 L1189 302.6 M1187 301.6 V307.6 M1191 306.6 L1195 302.6 M1193 301.6 V307.6 M1208 306.6 L1212 302.6 M1210 301.6 V307.6 M1243 306.6 L1247 302.6 M1245 301.6 V307.6 M1260 306.6 L1264 302.6 M1262 301.6 V307.6 M1266 306.6 L1270 302.6 M1268 301.6 V307.6 M1283 306.6 L1287 302.6 M1285 301.6 V307.6 M1319 306.6 L1323 302.6 M1321 301.6 V307.6 M1336 306.6 L1340 302.6 M1338 301.6 V307.6 M1342 306.6 L1346 302.6 M1344 301.6 V307.6 M1359 306.6 L1363 302.6 M1361 301.6 V307.6 M1395 306.6 L1399 302.6 M1397 301.6 V307.6 M1410 306.6 L1414 302.6 M1412 301.6 V307.6 M1416 306.6 L1420 302.6 M1418 301.6 V307.6 M1433 306.6 L1437 302.6 M1435 301.6 V307.6 M1468 306.6 L1472 302.6 M1470 301.6 V307.6 M1484 306.6 L1488 302.6 M1486 301.6 V307.6 M1490 306.6 L1494 302.6 M1492 301.6 V307.6 M1506 306.6 L1510 302.6 M1508 301.6 V307.6 M1543 306.6 L1547 302.6 M1545 301.6 V307.6 M1561 306.6 L1565 302.6 M1563 301.6 V307.6 M1569 306.6 L1573 302.6 M1571 301.6 V307.6 M955.5 856.4 L959.5 852.4 M957.5 851.4 V857.4 M983 856.4 L987 852.4 M985 851.4 V857.4 M1016 856.4 L1020 852.4 M1018 851.4 V857.4 M1034 856.4 L1038 852.4 M1036 851.4 V857.4 M1040 856.4 L1044 852.4 M1042 851.4 V857.4 M1060 856.4 L1064 852.4 M1062 851.4 V857.4 M1091 856.4 L1095 852.4 M1093 851.4 V857.4 M1148 856.4 L1152 852.4 M1150 851.4 V857.4 M1174 856.4 L1178 852.4 M1176 851.4 V857.4 M1194 856.4 L1198 852.4 M1196 851.4 V857.4 M1213 856.4 L1217 852.4 M1215 851.4 V857.4 M1266 856.4 L1270 852.4 M1268 851.4 V857.4 M1288 856.4 L1292 852.4 M1290 851.4 V857.4 M1315 856.4 L1319 852.4 M1317 851.4 V857.4 M1359 856.4 L1363 852.4 M1361 851.4 V857.4 M1412 856.4 L1416 852.4 M1414 851.4 V857.4 M1438 856.4 L1442 852.4 M1440 851.4 V857.4 M1494 856.4 L1498 852.4 M1496 851.4 V857.4 M1569 856.4 L1573 852.4 M1571 851.4 V857.4 M955.5 869.4 L959.5 865.4 M957.5 864.4 V870.4 M1000 869.4 L1004 865.4 M1002 864.4 V870.4 M1075 869.4 L1079 865.4 M1077 864.4 V870.4 M1162 869.4 L1166 865.4 M1164 864.4 V870.4 M1206 869.4 L1210 865.4 M1208 864.4 V870.4 M1293 869.4 L1297 865.4 M1295 864.4 V870.4 M1569 869.4 L1573 865.4 M1571 864.4 V870.4 M948 882 L952 878 M950 877 V883 M961 882 L965 878 M963 877 V883 M1037 882 L1041 878 M1039 877 V883 M1112 882 L1116 878 M1114 877 V883 M1188 882 L1192 878 M1190 877 V883 M1263 882 L1267 878 M1265 877 V883 M1338 882 L1342 878 M1340 877 V883 M1412 882 L1416 878 M1414 877 V883 M1487 882 L1491 878 M1489 877 V883 M1563 882 L1567 878 M1565 877 V883 M1569 882 L1573 878 M1571 877 V883 M864.8 367 L868.8 363 M863.8 365 H869.8 M864.8 374 L868.8 370 M863.8 372 H869.8 M864.8 424 L868.8 420 M863.8 422 H869.8 M864.8 479 L868.8 475 M863.8 477 H869.8 M864.8 535 L868.8 531 M863.8 533 H869.8 M864.8 590 L868.8 586 M863.8 588 H869.8 M864.8 647 L868.8 643 M863.8 645 H869.8 M864.8 702 L868.8 698 M863.8 700 H869.8 M864.8 780 L868.8 776 M863.8 778 H869.8 M864.8 792 L868.8 788 M863.8 790 H869.8 M878.1 367 L882.1 363 M877.1 365 H883.1 M878.1 392 L882.1 388 M877.1 390 H883.1 M878.1 459 L882.1 455 M877.1 457 H883.1 M878.1 520 L882.1 516 M877.1 518 H883.1 M878.1 584 L882.1 580 M877.1 582 H883.1 M878.1 642 L882.1 638 M877.1 640 H883.1 M878.1 702 L882.1 698 M877.1 700 H883.1 M878.1 792 L882.1 788 M877.1 790 H883.1 M891.2 367 L895.2 363 M890.2 365 H896.2 M891.2 387 L895.2 383 M890.2 385 H896.2 M891.2 422 L895.2 418 M890.2 420 H896.2 M891.2 434 L895.2 430 M890.2 432 H896.2 M891.2 448 L895.2 444 M890.2 446 H896.2 M891.2 477 L895.2 473 M890.2 475 H896.2 M891.2 504 L895.2 500 M890.2 502 H896.2 M891.2 516 L895.2 512 M890.2 514 H896.2 M891.2 530 L895.2 526 M890.2 528 H896.2 M891.2 562 L895.2 558 M890.2 560 H896.2 M891.2 577 L895.2 573 M890.2 575 H896.2 M891.2 592 L895.2 588 M890.2 590 H896.2 M891.2 622 L895.2 618 M890.2 620 H896.2 M891.2 652 L895.2 648 M890.2 650 H896.2 M891.2 667 L895.2 663 M890.2 665 H896.2 M891.2 702 L895.2 698 M890.2 700 H896.2 M891.2 719 L895.2 715 M890.2 717 H896.2 M891.2 762 L895.2 758 M890.2 760 H896.2 M891.2 792 L895.2 788 M890.2 790 H896.2 M1632.7 367 L1636.7 363 M1631.7 365 H1637.7 M1632.7 380 L1636.7 376 M1631.7 378 H1637.7 M1632.7 397 L1636.7 393 M1631.7 395 H1637.7 M1632.7 420 L1636.7 416 M1631.7 418 H1637.7 M1632.7 437 L1636.7 433 M1631.7 435 H1637.7 M1632.7 466 L1636.7 462 M1631.7 464 H1637.7 M1632.7 491 L1636.7 487 M1631.7 489 H1637.7 M1632.7 531 L1636.7 527 M1631.7 529 H1637.7 M1632.7 566 L1636.7 562 M1631.7 564 H1637.7 M1632.7 582 L1636.7 578 M1631.7 580 H1637.7 M1632.7 601 L1636.7 597 M1631.7 599 H1637.7 M1632.7 618 L1636.7 614 M1631.7 616 H1637.7 M1632.7 634 L1636.7 630 M1631.7 632 H1637.7 M1632.7 658 L1636.7 654 M1631.7 656 H1637.7 M1632.7 668 L1636.7 664 M1631.7 666 H1637.7 M1632.7 684 L1636.7 680 M1631.7 682 H1637.7 M1632.7 701 L1636.7 697 M1631.7 699 H1637.7 M1632.7 735 L1636.7 731 M1631.7 733 H1637.7 M1632.7 751 L1636.7 747 M1631.7 749 H1637.7 M1632.7 767 L1636.7 763 M1631.7 765 H1637.7 M1632.7 788 L1636.7 784 M1631.7 786 H1637.7 M1632.7 792 L1636.7 788 M1631.7 790 H1637.7 M1646.2 367 L1650.2 363 M1645.2 365 H1651.2 M1646.2 408 L1650.2 404 M1645.2 406 H1651.2 M1646.2 478 L1650.2 474 M1645.2 476 H1651.2 M1646.2 548 L1650.2 544 M1645.2 546 H1651.2 M1646.2 618 L1650.2 614 M1645.2 616 H1651.2 M1646.2 684 L1650.2 680 M1645.2 682 H1651.2 M1646.2 751 L1650.2 747 M1645.2 749 H1651.2 M1646.2 792 L1650.2 788 M1645.2 790 H1651.2 M1660 367 L1664 363 M1659 365 H1665 M1660 792 L1664 788 M1659 790 H1665" stroke="#444" stroke-width="0.8" fill="none"/><text x="979.25" y="285.5" font-size="5.5" fill="#555" text-anchor="middle">2,49</text><text x="1039.0" y="285.5" font-size="5.5" fill="#555" text-anchor="middle">4,34</text><text x="1115.0" y="285.5" font-size="5.5" fill="#555" text-anchor="middle">4,34</text><text x="1190.5" y="285.5" font-size="5.5" fill="#555" text-anchor="middle">4,29</text><text x="1266.0" y="285.5" font-size="5.5" fill="#555" text-anchor="middle">4,34</text><text x="1367.0" y="285.5" font-size="5.5" fill="#555" text-anchor="middle">7,20</text><text x="1451.5" y="285.5" font-size="5.5" fill="#555" text-anchor="middle">2,46</text><text x="1522.0" y="285.5" font-size="5.5" fill="#555" text-anchor="middle">5,60</text><text x="970.25" y="303.1" font-size="5.5" fill="#555" text-anchor="middle">1,46</text><text x="1001.0" y="303.1" font-size="5.5" fill="#555" text-anchor="middle">2,06</text><text x="1039.0" y="303.1" font-size="5.5" fill="#555" text-anchor="middle">2,29</text><text x="1077.0" y="303.1" font-size="5.5" fill="#555" text-anchor="middle">2,06</text><text x="1115.0" y="303.1" font-size="5.5" fill="#555" text-anchor="middle">2,29</text><text x="1152.5" y="303.1" font-size="5.5" fill="#555" text-anchor="middle">2,00</text><text x="1190.0" y="303.1" font-size="5.5" fill="#555" text-anchor="middle">2,29</text><text x="1227.5" y="303.1" font-size="5.5" fill="#555" text-anchor="middle">2,00</text><text x="1265.0" y="303.1" font-size="5.5" fill="#555" text-anchor="middle">2,29</text><text x="1303.0" y="303.1" font-size="5.5" fill="#555" text-anchor="middle">2,06</text><text x="1341.0" y="303.1" font-size="5.5" fill="#555" text-anchor="middle">2,29</text><text x="1379.0" y="303.1" font-size="5.5" fill="#555" text-anchor="middle">2,06</text><text x="1416.0" y="303.1" font-size="5.5" fill="#555" text-anchor="middle">2,17</text><text x="1452.5" y="303.1" font-size="5.5" fill="#555" text-anchor="middle">2,00</text><text x="1489.0" y="303.1" font-size="5.5" fill="#555" text-anchor="middle">2,17</text><text x="1526.5" y="303.1" font-size="5.5" fill="#555" text-anchor="middle">2,11</text><text x="1558.0" y="303.1" font-size="5.5" fill="#555" text-anchor="middle">1,49</text><text x="971.25" y="852.9" font-size="5.5" fill="#555" text-anchor="middle">1,57</text><text x="1001.5" y="852.9" font-size="5.5" fill="#555" text-anchor="middle">1,89</text><text x="1040.0" y="852.9" font-size="5.5" fill="#555" text-anchor="middle">2,51</text><text x="1077.5" y="852.9" font-size="5.5" fill="#555" text-anchor="middle">1,77</text><text x="1121.5" y="852.9" font-size="5.5" fill="#555" text-anchor="middle">3,26</text><text x="1173.0" y="852.9" font-size="5.5" fill="#555" text-anchor="middle">2,63</text><text x="1232.0" y="852.9" font-size="5.5" fill="#555" text-anchor="middle">4,11</text><text x="1292.5" y="852.9" font-size="5.5" fill="#555" text-anchor="middle">2,80</text><text x="1339.0" y="852.9" font-size="5.5" fill="#555" text-anchor="middle">2,51</text><text x="1387.5" y="852.9" font-size="5.5" fill="#555" text-anchor="middle">3,03</text><text x="1455.0" y="852.9" font-size="5.5" fill="#555" text-anchor="middle">4,69</text><text x="1533.5" y="852.9" font-size="5.5" fill="#555" text-anchor="middle">4,29</text><text x="979.75" y="865.9" font-size="5.5" fill="#555" text-anchor="middle">2,54</text><text x="1039.5" y="865.9" font-size="5.5" fill="#555" text-anchor="middle">4,29</text><text x="1120.5" y="865.9" font-size="5.5" fill="#555" text-anchor="middle">4,97</text><text x="1186.0" y="865.9" font-size="5.5" fill="#555" text-anchor="middle">2,51</text><text x="1251.5" y="865.9" font-size="5.5" fill="#555" text-anchor="middle">4,97</text><text x="1433.0" y="865.9" font-size="5.5" fill="#555" text-anchor="middle">15,77</text><text x="1001.0" y="878.5" font-size="5.5" fill="#555" text-anchor="middle">4,34</text><text x="1076.5" y="878.5" font-size="5.5" fill="#555" text-anchor="middle">4,29</text><text x="1152.0" y="878.5" font-size="5.5" fill="#555" text-anchor="middle">4,34</text><text x="1227.5" y="878.5" font-size="5.5" fill="#555" text-anchor="middle">4,29</text><text x="1302.5" y="878.5" font-size="5.5" fill="#555" text-anchor="middle">4,29</text><text x="1377.0" y="878.5" font-size="5.5" fill="#555" text-anchor="middle">4,23</text><text x="1451.5" y="878.5" font-size="5.5" fill="#555" text-anchor="middle">4,29</text><text x="1527.0" y="878.5" font-size="5.5" fill="#555" text-anchor="middle">4,34</text><text transform="translate(865.3 393.5) rotate(-90)" font-size="5.5" fill="#555" text-anchor="middle">3,26</text><text transform="translate(865.3 449.5) rotate(-90)" font-size="5.5" fill="#555" text-anchor="middle">3,14</text><text transform="translate(865.3 505.0) rotate(-90)" font-size="5.5" fill="#555" text-anchor="middle">3,20</text><text transform="translate(865.3 560.5) rotate(-90)" font-size="5.5" fill="#555" text-anchor="middle">3,14</text><text transform="translate(865.3 616.5) rotate(-90)" font-size="5.5" fill="#555" text-anchor="middle">3,26</text><text transform="translate(865.3 672.5) rotate(-90)" font-size="5.5" fill="#555" text-anchor="middle">3,14</text><text transform="translate(865.3 739.0) rotate(-90)" font-size="5.5" fill="#555" text-anchor="middle">4,46</text><text transform="translate(878.6 377.5) rotate(-90)" font-size="5.5" fill="#555" text-anchor="middle">1,43</text><text transform="translate(878.6 423.5) rotate(-90)" font-size="5.5" fill="#555" text-anchor="middle">3,83</text><text transform="translate(878.6 487.5) rotate(-90)" font-size="5.5" fill="#555" text-anchor="middle">3,49</text><text transform="translate(878.6 550.0) rotate(-90)" font-size="5.5" fill="#555" text-anchor="middle">3,66</text><text transform="translate(878.6 611.0) rotate(-90)" font-size="5.5" fill="#555" text-anchor="middle">3,31</text><text transform="translate(878.6 670.0) rotate(-90)" font-size="5.5" fill="#555" text-anchor="middle">3,43</text><text transform="translate(878.6 745.0) rotate(-90)" font-size="5.5" fill="#555" text-anchor="middle">5,14</text><text transform="translate(891.7 375.0) rotate(-90)" font-size="5.5" fill="#555" text-anchor="middle">1,14</text><text transform="translate(891.7 402.5) rotate(-90)" font-size="5.5" fill="#555" text-anchor="middle">2,00</text><text transform="translate(891.7 433.0) rotate(-90)" font-size="5.5" fill="#555" text-anchor="middle">1,49</text><text transform="translate(891.7 460.5) rotate(-90)" font-size="5.5" fill="#555" text-anchor="middle">1,66</text><text transform="translate(891.7 488.5) rotate(-90)" font-size="5.5" fill="#555" text-anchor="middle">1,54</text><text transform="translate(891.7 515.0) rotate(-90)" font-size="5.5" fill="#555" text-anchor="middle">1,49</text><text transform="translate(891.7 544.0) rotate(-90)" font-size="5.5" fill="#555" text-anchor="middle">1,83</text><text transform="translate(891.7 575.0) rotate(-90)" font-size="5.5" fill="#555" text-anchor="middle">1,71</text><text transform="translate(891.7 605.0) rotate(-90)" font-size="5.5" fill="#555" text-anchor="middle">1,71</text><text transform="translate(891.7 635.0) rotate(-90)" font-size="5.5" fill="#555" text-anchor="middle">1,71</text><text transform="translate(891.7 675.0) rotate(-90)" font-size="5.5" fill="#555" text-anchor="middle">2,86</text><text transform="translate(891.7 708.5) rotate(-90)" font-size="5.5" fill="#555" text-anchor="middle">0,97</text><text transform="translate(891.7 738.5) rotate(-90)" font-size="5.5" fill="#555" text-anchor="middle">2,46</text><text transform="translate(891.7 775.0) rotate(-90)" font-size="5.5" fill="#555" text-anchor="middle">1,71</text><text transform="translate(1633.2 380.0) rotate(-90)" font-size="5.5" fill="#555" text-anchor="middle">1,71</text><text transform="translate(1633.2 415.0) rotate(-90)" font-size="5.5" fill="#555" text-anchor="middle">2,29</text><text transform="translate(1633.2 462.0) rotate(-90)" font-size="5.5" fill="#555" text-anchor="middle">3,09</text><text transform="translate(1633.2 509.0) rotate(-90)" font-size="5.5" fill="#555" text-anchor="middle">2,29</text><text transform="translate(1633.2 546.5) rotate(-90)" font-size="5.5" fill="#555" text-anchor="middle">2,00</text><text transform="translate(1633.2 581.5) rotate(-90)" font-size="5.5" fill="#555" text-anchor="middle">2,00</text><text transform="translate(1633.2 615.5) rotate(-90)" font-size="5.5" fill="#555" text-anchor="middle">1,89</text><text transform="translate(1633.2 649.0) rotate(-90)" font-size="5.5" fill="#555" text-anchor="middle">1,94</text><text transform="translate(1633.2 682.5) rotate(-90)" font-size="5.5" fill="#555" text-anchor="middle">1,89</text><text transform="translate(1633.2 716.0) rotate(-90)" font-size="5.5" fill="#555" text-anchor="middle">1,94</text><text transform="translate(1633.2 749.0) rotate(-90)" font-size="5.5" fill="#555" text-anchor="middle">1,83</text><text transform="translate(1633.2 777.5) rotate(-90)" font-size="5.5" fill="#555" text-anchor="middle">1,43</text><text transform="translate(1646.7 385.5) rotate(-90)" font-size="5.5" fill="#555" text-anchor="middle">2,34</text><text transform="translate(1646.7 441.0) rotate(-90)" font-size="5.5" fill="#555" text-anchor="middle">4,00</text><text transform="translate(1646.7 511.0) rotate(-90)" font-size="5.5" fill="#555" text-anchor="middle">4,00</text><text transform="translate(1646.7 581.0) rotate(-90)" font-size="5.5" fill="#555" text-anchor="middle">4,00</text><text transform="translate(1646.7 649.0) rotate(-90)" font-size="5.5" fill="#555" text-anchor="middle">3,77</text><text transform="translate(1646.7 715.5) rotate(-90)" font-size="5.5" fill="#555" text-anchor="middle">3,83</text><text transform="translate(1646.7 769.5) rotate(-90)" font-size="5.5" fill="#555" text-anchor="middle">2,34</text><text x="1264" y="267" font-size="5" fill="#888">33,51</text><path d="M1089 312 V846" stroke="#333" stroke-width="1" stroke-dasharray="7 2 1 2" fill="none"/><path d="M1089 328 L1100 334 L1089 340Z M1089 817 L1100 823 L1089 829Z" fill="#111"/><text transform="translate(1096 322) rotate(-90)" font-size="8" fill="#444">A - A</text><text transform="translate(1096 849) rotate(-90)" font-size="8" fill="#444">A - A</text><path d="M968 441 H1560 M968 511 H1560 M968 581 H1560 M968 651 H1341 M968 714.5 H1341 M1039 375 V716 M1114 375 V716 M1190 375 V716 M1265 375 V716 M1341 375 V716 M1414 375 V581 M1489 375 V581" stroke="#d0d0d0" stroke-width="4" stroke-dasharray="6 2.5" fill="none"/><path d="M968 438.5 H1560 M968 443.5 H1560 M968 508.5 H1560 M968 513.5 H1560 M968 578.5 H1560 M968 583.5 H1560 M968 648.5 H1341 M968 653.5 H1341 M968 712.0 H1341 M968 717.0 H1341 M1036.5 375 V780 M1041.5 375 V780 M1111.5 375 V716 M1116.5 375 V716 M1187.5 375 V716 M1192.5 375 V716 M1262.5 375 V716 M1267.5 375 V716 M1338.5 375 V780 M1343.5 375 V780 M1411.5 375 V581 M1416.5 375 V581 M1486.5 375 V581 M1491.5 375 V581" stroke="#444" stroke-width="1" stroke-dasharray="6 2.5" fill="none"/><path d="M1039 441 H1048 M1065 441 H1114 M1120 441 H1170 M1215 441 H1260 M1341 441 H1356 M1371 441 H1420 M1436 441 H1443 M1461 441 H1530 M1546 441 H1560 M968 511 H1039 M1341 511 H1560 M1341 581 H1560 M968 651 H1341 M1118 716 H1160 M1187 716 H1203 M1230 716 H1265 M1268 716 H1341 M1040 680 H1064 M1082 680 H1118 M1039 375 V488 M1039 504 V780 M1114 375 V441 M1118 651 V716 M1341 375 V780 M1265 375 V441 M1262 651 V716 M1414 375 V581 M1489 375 V581 M1451 375 V441 M1385 398.5 H1412 M1385 419 H1412 M1492 398.5 H1520 M1492 419 H1520" stroke="#1e1e1e" stroke-width="2.6" fill="none"/><path d="M1384 749 H1525 V780 M1384 749 V780 M1342 376 L1414 440 M1414 376 L1342 440 M1416 376 L1450 440 M1450 376 L1416 440 M1490 376 L1558 440 M1558 376 L1490 440 M1385 380 A18 18 0 0 0 1385 398.5 M1385 400 A18 18 0 0 0 1385 419 M1385 421 A18 18 0 0 0 1385 438 M1520 380 A18 18 0 0 1 1520 398.5 M1520 400 A18 18 0 0 1 1520 419 M1520 421 A18 18 0 0 1 1520 438 M1117 514 H1151 V543 H1117Z M1228 514 H1263 V543 H1228Z M1112 543 H1158 M1222 543 H1268" stroke="#444" stroke-width="1" fill="none"/><path d="M1275 382.0 H1310 M1275 388.5 H1310 M1275 395.0 H1310 M1275 401.5 H1310 M1275 408.0 H1310 M1275 414.5 H1310 M1275 421.0 H1310 M1275 427.5 H1310 M1275 434.0 H1310 M1272 378 L1335 386 L1338 437 M1310 380 V437 M1272 660.0 H1338 M1272 666.5 H1338 M1272 673.0 H1338 M1272 679.5 H1338 M1272 686.0 H1338 M1272 692.5 H1338 M1272 699.0 H1338 M1280 660 V705 H1332 V660 M1305 655 V705" stroke="#b8b8b8" stroke-width="0.8" stroke-dasharray="3 1.5" fill="none"/><path d="M1119 516 h4 v27 h-4Z M1145 516 h4 v27 h-4Z M1230 516 h4 v27 h-4Z M1257 516 h4 v27 h-4Z" fill="#333"/><path d="M1048 441 V458 A17 17 0 0 0 1065 441 M1168 443 V455 A12 12 0 0 1 1156 443 M1168 443 V455 A12 12 0 0 0 1180 443 M1215 443 V455 A12 12 0 0 0 1227 443 M1039 488 H1058 A19 16 0 0 1 1039 504 M1041 630 V614 A16 16 0 0 1 1057 630 M1041 665 V649 A16 16 0 0 1 1057 665 M1358 443 V455 A12 12 0 0 0 1370 443 M1415 443 V455 A12 12 0 0 0 1427 443 M1480 443 V457 A14 14 0 0 1 1466 443 M1545 443 V455 A12 12 0 0 1 1533 443 M1350 510 V498 A12 12 0 0 1 1362 510 M1365 510 V498 A12 12 0 0 0 1353 510 M1440 510 V496 A14 14 0 0 1 1454 510 M1530 510 V498 A12 12 0 0 1 1542 510 M1545 510 V498 A12 12 0 0 0 1533 510 M1350 581 V569 A12 12 0 0 1 1362 581 M1365 581 V569 A12 12 0 0 0 1353 581 M1530 581 V569 A12 12 0 0 1 1542 581 M1545 581 V569 A12 12 0 0 0 1533 581 M1160 651 V663 A12 12 0 0 1 1148 651 M1160 651 V663 A12 12 0 0 0 1172 651 M1207 651 V663 A12 12 0 0 1 1195 651 M1207 651 V663 A12 12 0 0 0 1219 651 M1160 718 V730 A12 12 0 0 1 1148 718 M1160 718 V730 A12 12 0 0 0 1172 718 M1207 718 V730 A12 12 0 0 1 1195 718 M1207 718 V730 A12 12 0 0 0 1219 718 M1064 680 V665 A15 15 0 0 1 1079 680 M1345 725 V711 A14 14 0 0 1 1359 725 M1380 395 V409 A14 14 0 0 1 1366 395 M1380 425 V411 A14 14 0 0 0 1366 425 M1520 395 V409 A14 14 0 0 1 1506 395 M1520 425 V411 A14 14 0 0 0 1506 425 M1567 465 V479 A14 14 0 0 0 1581 465 M1567 465 V451 A14 14 0 0 1 1581 465" stroke="#444" stroke-width="0.9" fill="none"/><rect x="958" y="366" width="27" height="9" fill="url(#hat)" stroke="#111" stroke-width="1.6"/><path d="M959.5 368.3 H983.5" stroke="#fff" stroke-width="1.1" stroke-dasharray="1.4 1.6"/><path d="M985 366 H1018 M985 369.5 H1018 M985 371.5 H1018 M985 375 H1018" stroke="#666" stroke-width="0.8" fill="none"/><rect x="1018" y="366" width="43" height="9" fill="url(#hat)" stroke="#111" stroke-width="1.6"/><path d="M1019.5 368.3 H1059.5" stroke="#fff" stroke-width="1.1" stroke-dasharray="1.4 1.6"/><path d="M1061 366 H1094 M1061 369.5 H1094 M1061 371.5 H1094 M1061 375 H1094" stroke="#666" stroke-width="0.8" fill="none"/><rect x="1094" y="366" width="42" height="9" fill="url(#hat)" stroke="#111" stroke-width="1.6"/><path d="M1095.5 368.3 H1134.5" stroke="#fff" stroke-width="1.1" stroke-dasharray="1.4 1.6"/><path d="M1136 366 H1169 M1136 369.5 H1169 M1136 371.5 H1169 M1136 375 H1169" stroke="#666" stroke-width="0.8" fill="none"/><rect x="1169" y="366" width="42" height="9" fill="url(#hat)" stroke="#111" stroke-width="1.6"/><path d="M1170.5 368.3 H1209.5" stroke="#fff" stroke-width="1.1" stroke-dasharray="1.4 1.6"/><path d="M1211 366 H1244 M1211 369.5 H1244 M1211 371.5 H1244 M1211 375 H1244" stroke="#666" stroke-width="0.8" fill="none"/><rect x="1244" y="366" width="102" height="9" fill="url(#hat)" stroke="#111" stroke-width="1.6"/><path d="M1245.5 368.3 H1344.5" stroke="#fff" stroke-width="1.1" stroke-dasharray="1.4 1.6"/><path d="M1346 366 H1381 M1346 369.5 H1381 M1346 371.5 H1381 M1346 375 H1381" stroke="#666" stroke-width="0.8" fill="none"/><rect x="1381" y="366" width="44" height="9" fill="url(#hat)" stroke="#111" stroke-width="1.6"/><path d="M1382.5 368.3 H1423.5" stroke="#fff" stroke-width="1.1" stroke-dasharray="1.4 1.6"/><path d="M1425 366 H1441 M1425 369.5 H1441 M1425 371.5 H1441 M1425 375 H1441" stroke="#666" stroke-width="0.8" fill="none"/><rect x="1441" y="366" width="70" height="9" fill="url(#hat)" stroke="#111" stroke-width="1.6"/><path d="M1442.5 368.3 H1509.5" stroke="#fff" stroke-width="1.1" stroke-dasharray="1.4 1.6"/><path d="M1511 366 H1544 M1511 369.5 H1544 M1511 371.5 H1544 M1511 375 H1544" stroke="#666" stroke-width="0.8" fill="none"/><rect x="1544" y="366" width="26" height="9" fill="url(#hat)" stroke="#111" stroke-width="1.6"/><path d="M1545.5 368.3 H1568.5" stroke="#fff" stroke-width="1.1" stroke-dasharray="1.4 1.6"/><rect x="958" y="780.5" width="27" height="9.5" fill="url(#hat)" stroke="#111" stroke-width="1.6"/><path d="M959.5 782.8 H983.5" stroke="#fff" stroke-width="1.1" stroke-dasharray="1.4 1.6"/><path d="M985 780.5 H1018 M985 784.25 H1018 M985 786.25 H1018 M985 790 H1018" stroke="#666" stroke-width="0.8" fill="none"/><rect x="1018" y="780.5" width="43" height="9.5" fill="url(#hat)" stroke="#111" stroke-width="1.6"/><path d="M1019.5 782.8 H1059.5" stroke="#fff" stroke-width="1.1" stroke-dasharray="1.4 1.6"/><path d="M1061 780.5 H1094 M1061 784.25 H1094 M1061 786.25 H1094 M1061 790 H1094" stroke="#666" stroke-width="0.8" fill="none"/><rect x="1094" y="780.5" width="27" height="9.5" fill="url(#hat)" stroke="#111" stroke-width="1.6"/><path d="M1095.5 782.8 H1119.5" stroke="#fff" stroke-width="1.1" stroke-dasharray="1.4 1.6"/><rect x="1259" y="780.5" width="25" height="9.5" fill="url(#hat)" stroke="#111" stroke-width="1.6"/><path d="M1260.5 782.8 H1282.5" stroke="#fff" stroke-width="1.1" stroke-dasharray="1.4 1.6"/><path d="M1284 780.5 H1317 M1284 784.25 H1317 M1284 786.25 H1317 M1284 790 H1317" stroke="#666" stroke-width="0.8" fill="none"/><rect x="1317" y="780.5" width="253" height="9.5" fill="url(#hat)" stroke="#111" stroke-width="1.6"/><path d="M1318.5 782.8 H1568.5" stroke="#fff" stroke-width="1.1" stroke-dasharray="1.4 1.6"/><rect x="958" y="366" width="10" height="24" fill="url(#hat)" stroke="#111" stroke-width="1.6"/><path d="M960.3 367.5 V388.5" stroke="#fff" stroke-width="1.1" stroke-dasharray="1.4 1.6"/><path d="M958 390 V423 M962.0 390 V423 M964.0 390 V423 M968 390 V423" stroke="#666" stroke-width="0.8" fill="none"/><rect x="958" y="423" width="10" height="37" fill="url(#hat)" stroke="#111" stroke-width="1.6"/><path d="M960.3 424.5 V458.5" stroke="#fff" stroke-width="1.1" stroke-dasharray="1.4 1.6"/><path d="M958 460 V493 M962.0 460 V493 M964.0 460 V493 M968 460 V493" stroke="#666" stroke-width="0.8" fill="none"/><rect x="958" y="493" width="10" height="38" fill="url(#hat)" stroke="#111" stroke-width="1.6"/><path d="M960.3 494.5 V529.5" stroke="#fff" stroke-width="1.1" stroke-dasharray="1.4 1.6"/><path d="M958 531 V563 M962.0 531 V563 M964.0 531 V563 M968 531 V563" stroke="#666" stroke-width="0.8" fill="none"/><rect x="958" y="563" width="10" height="39" fill="url(#hat)" stroke="#111" stroke-width="1.6"/><path d="M960.3 564.5 V600.5" stroke="#fff" stroke-width="1.1" stroke-dasharray="1.4 1.6"/><path d="M958 602 V635 M962.0 602 V635 M964.0 602 V635 M968 602 V635" stroke="#666" stroke-width="0.8" fill="none"/><rect x="958" y="635" width="10" height="30" fill="url(#hat)" stroke="#111" stroke-width="1.6"/><path d="M960.3 636.5 V663.5" stroke="#fff" stroke-width="1.1" stroke-dasharray="1.4 1.6"/><path d="M958 665 V699 M962.0 665 V699 M964.0 665 V699 M968 665 V699" stroke="#666" stroke-width="0.8" fill="none"/><rect x="958" y="699" width="10" height="91" fill="url(#hat)" stroke="#111" stroke-width="1.6"/><path d="M960.3 700.5 V788.5" stroke="#fff" stroke-width="1.1" stroke-dasharray="1.4 1.6"/><rect x="1560.5" y="366" width="9.5" height="12" fill="url(#hat)" stroke="#111" stroke-width="1.6"/><path d="M1562.8 367.5 V376.5" stroke="#fff" stroke-width="1.1" stroke-dasharray="1.4 1.6"/><path d="M1560.5 378 V395 M1564.25 378 V395 M1566.25 378 V395 M1570 378 V395" stroke="#666" stroke-width="0.8" fill="none"/><rect x="1560.5" y="395" width="9.5" height="23" fill="url(#hat)" stroke="#111" stroke-width="1.6"/><path d="M1562.8 396.5 V416.5" stroke="#fff" stroke-width="1.1" stroke-dasharray="1.4 1.6"/><path d="M1560.5 418 V435 M1564.25 418 V435 M1566.25 418 V435 M1570 418 V435" stroke="#666" stroke-width="0.8" fill="none"/><rect x="1560.5" y="435" width="9.5" height="29" fill="url(#hat)" stroke="#111" stroke-width="1.6"/><path d="M1562.8 436.5 V462.5" stroke="#fff" stroke-width="1.1" stroke-dasharray="1.4 1.6"/><path d="M1560.5 464 V489 M1564.25 464 V489 M1566.25 464 V489 M1570 464 V489" stroke="#666" stroke-width="0.8" fill="none"/><rect x="1560.5" y="489" width="9.5" height="40" fill="url(#hat)" stroke="#111" stroke-width="1.6"/><path d="M1562.8 490.5 V527.5" stroke="#fff" stroke-width="1.1" stroke-dasharray="1.4 1.6"/><path d="M1560.5 529 V564 M1564.25 529 V564 M1566.25 529 V564 M1570 529 V564" stroke="#666" stroke-width="0.8" fill="none"/><rect x="1560.5" y="564" width="9.5" height="35" fill="url(#hat)" stroke="#111" stroke-width="1.6"/><path d="M1562.8 565.5 V597.5" stroke="#fff" stroke-width="1.1" stroke-dasharray="1.4 1.6"/><path d="M1560.5 599 V632 M1564.25 599 V632 M1566.25 599 V632 M1570 599 V632" stroke="#666" stroke-width="0.8" fill="none"/><rect x="1560.5" y="632" width="9.5" height="34" fill="url(#hat)" stroke="#111" stroke-width="1.6"/><path d="M1562.8 633.5 V664.5" stroke="#fff" stroke-width="1.1" stroke-dasharray="1.4 1.6"/><path d="M1560.5 666 V699 M1564.25 666 V699 M1566.25 666 V699 M1570 666 V699" stroke="#666" stroke-width="0.8" fill="none"/><rect x="1560.5" y="699" width="9.5" height="34" fill="url(#hat)" stroke="#111" stroke-width="1.6"/><path d="M1562.8 700.5 V731.5" stroke="#fff" stroke-width="1.1" stroke-dasharray="1.4 1.6"/><path d="M1560.5 733 V765 M1564.25 733 V765 M1566.25 733 V765 M1570 733 V765" stroke="#666" stroke-width="0.8" fill="none"/><rect x="1560.5" y="765" width="9.5" height="25" fill="url(#hat)" stroke="#111" stroke-width="1.6"/><path d="M1562.8 766.5 V788.5" stroke="#fff" stroke-width="1.1" stroke-dasharray="1.4 1.6"/><rect x="1111.5" y="714" width="9.5" height="76" fill="url(#hat)" stroke="#111" stroke-width="1.6"/><path d="M1113.8 715.5 V788.5" stroke="#fff" stroke-width="1.1" stroke-dasharray="1.4 1.6"/><rect x="1258.5" y="714" width="9.5" height="76" fill="url(#hat)" stroke="#111" stroke-width="1.6"/><path d="M1260.8 715.5 V788.5" stroke="#fff" stroke-width="1.1" stroke-dasharray="1.4 1.6"/><path d="M936 406 H990 M936 476.5 H990 M936 547 H990 M936 618.5 H990 M936 683 H990 M936 751 H990 M1548 386.5 H1598 M1548 426.5 H1598 M1548 476.5 H1598 M1548 546.5 H1598 M1548 613 H1598 M1548 683 H1598 M1548 749 H1598" stroke="#777" stroke-width="0.7" fill="none"/><text x="950" y="404.5" font-size="5" fill="#666">2,20</text><text x="950" y="411.5" font-size="5" fill="#666">1,50</text><text x="940" y="408" font-size="5" fill="#666">D</text><text x="950" y="475.0" font-size="5" fill="#666">2,20</text><text x="950" y="482.0" font-size="5" fill="#666">1,50</text><text x="940" y="478.5" font-size="5" fill="#666">D</text><text x="950" y="545.5" font-size="5" fill="#666">2,20</text><text x="950" y="552.5" font-size="5" fill="#666">1,50</text><text x="940" y="549" font-size="5" fill="#666">D</text><text x="950" y="617.0" font-size="5" fill="#666">2,20</text><text x="950" y="624.0" font-size="5" fill="#666">1,50</text><text x="940" y="620.5" font-size="5" fill="#666">D</text><text x="950" y="681.5" font-size="5" fill="#666">2,20</text><text x="950" y="688.5" font-size="5" fill="#666">1,50</text><text x="940" y="685" font-size="5" fill="#666">D</text><text x="950" y="749.5" font-size="5" fill="#666">2,20</text><text x="950" y="756.5" font-size="5" fill="#666">1,50</text><text x="940" y="753" font-size="5" fill="#666">D</text><text x="1574" y="385.0" font-size="5" fill="#666">1,20</text><text x="1574" y="392.0" font-size="5" fill="#666">0,50</text><text x="1590" y="388.5" font-size="5" fill="#666">B</text><text x="1574" y="425.0" font-size="5" fill="#666">1,20</text><text x="1574" y="432.0" font-size="5" fill="#666">0,50</text><text x="1590" y="428.5" font-size="5" fill="#666">B</text><text x="1574" y="475.0" font-size="5" fill="#666">1,20</text><text x="1574" y="482.0" font-size="5" fill="#666">0,50</text><text x="1590" y="478.5" font-size="5" fill="#666">B</text><text x="1574" y="545.0" font-size="5" fill="#666">1,20</text><text x="1574" y="552.0" font-size="5" fill="#666">0,50</text><text x="1590" y="548.5" font-size="5" fill="#666">B</text><text x="1574" y="611.5" font-size="5" fill="#666">1,20</text><text x="1574" y="618.5" font-size="5" fill="#666">0,50</text><text x="1590" y="615" font-size="5" fill="#666">B</text><text x="1574" y="681.5" font-size="5" fill="#666">1,20</text><text x="1574" y="688.5" font-size="5" fill="#666">0,50</text><text x="1590" y="685" font-size="5" fill="#666">B</text><text x="1574" y="747.5" font-size="5" fill="#666">1,20</text><text x="1574" y="754.5" font-size="5" fill="#666">0,50</text><text x="1590" y="751" font-size="5" fill="#666">B</text><text x="995" y="394" font-size="6" font-weight="bold" fill="#333" text-anchor="middle">Offices</text><text x="995" y="402" font-size="4.5" fill="#777" text-anchor="middle">24,24 m²</text><text x="1077" y="394" font-size="6" font-weight="bold" fill="#333" text-anchor="middle">Manager</text><text x="1077" y="402" font-size="4.5" fill="#777" text-anchor="middle">16,24 m²</text><text x="1195" y="394" font-size="6" font-weight="bold" fill="#333" text-anchor="middle">Dining hall</text><text x="1195" y="402" font-size="4.5" fill="#777" text-anchor="middle">84,45 m²</text><text x="1303" y="394" font-size="6" font-weight="bold" fill="#333" text-anchor="middle">Stairway</text><text x="1303" y="402" font-size="4.5" fill="#777" text-anchor="middle">10,75 m²</text><text x="1372" y="394" font-size="6" font-weight="bold" fill="#333" text-anchor="middle">Toilet</text><text x="1372" y="402" font-size="4.5" fill="#777" text-anchor="middle">10,13 m²</text><text x="1432" y="394" font-size="6" font-weight="bold" fill="#333" text-anchor="middle">Toilet</text><text x="1432" y="402" font-size="4.5" fill="#777" text-anchor="middle">7,03 m²</text><text x="1467" y="393" font-size="6" font-weight="bold" fill="#333" text-anchor="middle">Storage</text><text x="1467" y="401" font-size="4.5" fill="#777" text-anchor="middle">7,18 m²</text><text x="1535" y="394" font-size="6" font-weight="bold" fill="#333" text-anchor="middle">Toilet</text><text x="1535" y="402" font-size="4.5" fill="#777" text-anchor="middle">24,84 m²</text><text x="995" y="542" font-size="6" font-weight="bold" fill="#333" text-anchor="middle">Offices</text><text x="995" y="550" font-size="4.5" fill="#777" text-anchor="middle">32,16 m²</text><text x="1188" y="542" font-size="6" font-weight="bold" fill="#333" text-anchor="middle">Lobby</text><text x="1188" y="550" font-size="4.5" fill="#777" text-anchor="middle">167,24 m²</text><text x="1367" y="542" font-size="6" font-weight="bold" fill="#333" text-anchor="middle">Foyer</text><text x="1367" y="550" font-size="4.5" fill="#777" text-anchor="middle">18,24 m²</text><text x="1440" y="542" font-size="6" font-weight="bold" fill="#333" text-anchor="middle">Control room</text><text x="1440" y="550" font-size="4.5" fill="#777" text-anchor="middle">16,00 m²</text><text x="1532" y="542" font-size="6" font-weight="bold" fill="#333" text-anchor="middle">Foyer</text><text x="1532" y="550" font-size="4.5" fill="#777" text-anchor="middle">14,88 m²</text><text x="1402" y="473" font-size="6" font-weight="bold" fill="#333" text-anchor="middle">Corridor</text><text x="1402" y="481" font-size="4.5" fill="#777" text-anchor="middle">47,51 m²</text><text x="1188" y="673" font-size="6" font-weight="bold" fill="#333" text-anchor="middle">Entrance</text><text x="1188" y="681" font-size="4.5" fill="#777" text-anchor="middle">23,8 m²</text><text x="1303" y="673" font-size="6" font-weight="bold" fill="#333" text-anchor="middle">Stairway</text><text x="1303" y="681" font-size="4.5" fill="#777" text-anchor="middle">15,52 m²</text><text x="1003" y="732" font-size="6" font-weight="bold" fill="#333" text-anchor="middle">Archive</text><text x="1003" y="740" font-size="4.5" fill="#777" text-anchor="middle">30,82 m²</text><text x="1077" y="732" font-size="6" font-weight="bold" fill="#333" text-anchor="middle">Security</text><text x="1077" y="740" font-size="4.5" fill="#777" text-anchor="middle">23,10 m²</text><text x="1445" y="762" font-size="6" font-weight="bold" fill="#333" text-anchor="middle">Meeting</text><text x="1445" y="770" font-size="4.5" fill="#777" text-anchor="middle">143,37 m²</text><path d="M1018 384.5 h8 v5 h-8Z M1026 387 h14 M1097 461.5 h8 v5 h-8Z M1105 464 h14 M1169 461.5 h8 v5 h-8Z M1177 464 h14 M1277 461.5 h8 v5 h-8Z M1285 464 h14 M1018 454.5 h8 v5 h-8Z M1026 457 h14 M1014 567.5 h8 v5 h-8Z M1022 570 h14 M1014 680.5 h8 v5 h-8Z M1022 683 h14 M1122 691.5 h8 v5 h-8Z M1130 694 h14 M1232 691.5 h8 v5 h-8Z M1240 694 h14 M1014 737.5 h8 v5 h-8Z M1022 740 h14 M1183 769.5 h8 v5 h-8Z M1191 772 h14 M1223 775.5 h8 v5 h-8Z M1231 778 h14 M1280 702.5 h8 v5 h-8Z M1288 705 h14 M1360 694.5 h8 v5 h-8Z M1368 697 h14 M1576 455.2 h8 v5 h-8Z M1584 457.7 h14 M1576 578.5 h8 v5 h-8Z M1584 581 h14 M1576 647.5 h8 v5 h-8Z M1584 650 h14 M1576 683.5 h8 v5 h-8Z M1584 686 h14 M1576 497.5 h8 v5 h-8Z M1584 500 h14 M1576 542.5 h8 v5 h-8Z M1584 545 h14" stroke="#555" stroke-width="0.8" fill="#eee"/><circle cx="1202" cy="568" r="4" fill="#fff" stroke="#222" stroke-width="1"/><path d="M1202 564 A4 4 0 0 1 1206 568 L1202 568Z M1202 572 A4 4 0 0 1 1198 568 L1202 568Z" fill="#111"/><path d="M1207 568 h10" stroke="#777" stroke-width="0.8"/><circle cx="1202" cy="683" r="4" fill="#fff" stroke="#222" stroke-width="1"/><path d="M1202 679 A4 4 0 0 1 1206 683 L1202 683Z M1202 687 A4 4 0 0 1 1198 683 L1202 683Z" fill="#111"/><path d="M1207 683 h10" stroke="#777" stroke-width="0.8"/><circle cx="1202" cy="763" r="4" fill="#fff" stroke="#222" stroke-width="1"/><path d="M1202 759 A4 4 0 0 1 1206 763 L1202 763Z M1202 767 A4 4 0 0 1 1198 763 L1202 763Z" fill="#111"/><path d="M1207 763 h10" stroke="#777" stroke-width="0.8"/><circle cx="1501" cy="740" r="4" fill="#fff" stroke="#222" stroke-width="1"/><path d="M1501 736 A4 4 0 0 1 1505 740 L1501 740Z M1501 744 A4 4 0 0 1 1497 740 L1501 740Z" fill="#111"/><path d="M1506 740 h10" stroke="#777" stroke-width="0.8"/><circle cx="1501" cy="764" r="4" fill="#fff" stroke="#222" stroke-width="1"/><path d="M1501 760 A4 4 0 0 1 1505 764 L1501 764Z M1501 768 A4 4 0 0 1 1497 764 L1501 764Z" fill="#111"/><path d="M1506 764 h10" stroke="#777" stroke-width="0.8"/><rect x="1180" y="772" width="18" height="18" fill="none" stroke="#555" stroke-width="0.8" stroke-dasharray="2 1"/><circle cx="1189" cy="781" r="3.5" fill="#555"/><path d="M1001.5 353 V386 M1077.5 353 V386 M1152.5 353 V386 M1227.5 353 V386 M1363.5 353 V386 M1433 353 V386 M1527.5 353 V386" stroke="#333" stroke-width="0.9" fill="none"/><text x="1001.5" y="350" font-size="5" fill="#555" text-anchor="middle">01</text><text transform="translate(1000.0 362) rotate(-90)" font-size="4.5" fill="#777">2,26</text><text transform="translate(1006.5 362) rotate(-90)" font-size="4.5" fill="#777">1,38</text><text x="1077.5" y="350" font-size="5" fill="#555" text-anchor="middle">02</text><text transform="translate(1076.0 362) rotate(-90)" font-size="4.5" fill="#777">2,26</text><text transform="translate(1082.5 362) rotate(-90)" font-size="4.5" fill="#777">1,38</text><text x="1152.5" y="350" font-size="5" fill="#555" text-anchor="middle">03</text><text transform="translate(1151.0 362) rotate(-90)" font-size="4.5" fill="#777">2,26</text><text transform="translate(1157.5 362) rotate(-90)" font-size="4.5" fill="#777">1,38</text><text x="1227.5" y="350" font-size="5" fill="#555" text-anchor="middle">04</text><text transform="translate(1226.0 362) rotate(-90)" font-size="4.5" fill="#777">2,26</text><text transform="translate(1232.5 362) rotate(-90)" font-size="4.5" fill="#777">1,38</text><text x="1363.5" y="350" font-size="5" fill="#555" text-anchor="middle">05</text><text transform="translate(1362.0 362) rotate(-90)" font-size="4.5" fill="#777">2,26</text><text transform="translate(1368.5 362) rotate(-90)" font-size="4.5" fill="#777">1,38</text><text x="1433" y="350" font-size="5" fill="#555" text-anchor="middle">06</text><text transform="translate(1431.5 362) rotate(-90)" font-size="4.5" fill="#777">2,26</text><text transform="translate(1438 362) rotate(-90)" font-size="4.5" fill="#777">1,38</text><text x="1527.5" y="350" font-size="5" fill="#555" text-anchor="middle">07</text><text transform="translate(1526.0 362) rotate(-90)" font-size="4.5" fill="#777">2,26</text><text transform="translate(1532.5 362) rotate(-90)" font-size="4.5" fill="#777">1,38</text><path d="M1294 349 h5 v12 h-5Z M1296.5 361 V385" stroke="#555" stroke-width="0.8" fill="none"/><path d="M1001.5 783 V815 M1077.5 783 V815 M1302 783 V815" stroke="#333" stroke-width="0.9" fill="none"/><text transform="translate(1000.0 806) rotate(-90)" font-size="4.5" fill="#777">2,26</text><text transform="translate(1006.5 806) rotate(-90)" font-size="4.5" fill="#777">1,38</text><text transform="translate(1076.0 806) rotate(-90)" font-size="4.5" fill="#777">2,26</text><text transform="translate(1082.5 806) rotate(-90)" font-size="4.5" fill="#777">1,38</text><text transform="translate(1300.5 806) rotate(-90)" font-size="4.5" fill="#777">2,26</text><text transform="translate(1307 806) rotate(-90)" font-size="4.5" fill="#777">1,38</text><path d="M1042 796 h5 v10 h-5Z M1050 796 h5 v10 h-5Z M1449.5 796 h5 v12 h-5Z M1486 796 h5 v12 h-5Z M1452 760 V796 M1488.5 760 V796" stroke="#555" stroke-width="0.8" fill="none"/><path d="M1358 749 H1384 M1358 780 H1384 M1360.0 750 V779 M1363.2 750 V779 M1366.4 750 V779 M1369.6 750 V779 M1372.8 750 V779 M1376.0 750 V779 M1379.2 750 V779 M1382.4 750 V779" stroke="#aaa" stroke-width="0.7" fill="none"/><path d="M1665 553.8 V924 M1665 553.8 H1829 M1665 613.4 H1829 M1665 652.5 H1829 M1665 673 H1829 M1665 692 H1829 M1665 711.7 H1829 M1665 730.7 H1829 M1665 750 H1829 M1665 769 H1829 M1665 788.7 H1829 M1665 808.5 H1829 M1665 827.4 H1829 M1665 847.1 H1829 M1747 652.5 V847.1" stroke="#6a6a6a" stroke-width="1.2" fill="none"/><text x="1671" y="665.25" font-size="7" font-weight="bold" fill="#222">Project name</text><text x="1754" y="665.25" font-size="7" fill="#444">Conference centre</text><text x="1671" y="685.0" font-size="7" font-weight="bold" fill="#222">Address</text><text x="1754" y="685.0" font-size="7" fill="#444">PlanRadar Lane 1</text><text x="1671" y="704.35" font-size="7" font-weight="bold" fill="#222">Project number</text><text x="1754" y="704.35" font-size="7" fill="#444">1901</text><text x="1671" y="723.7" font-size="7" font-weight="bold" fill="#222">Plan number</text><text x="1754" y="723.7" font-size="7" fill="#444">19 Test 001</text><text x="1671" y="742.85" font-size="7" font-weight="bold" fill="#222">Plan size</text><text x="1754" y="742.85" font-size="7" fill="#444">A2</text><text x="1671" y="762.0" font-size="7" font-weight="bold" fill="#222">Scale</text><text x="1754" y="762.0" font-size="7" fill="#444">1:100</text><text x="1671" y="781.35" font-size="7" font-weight="bold" fill="#222">Plan type</text><text x="1754" y="781.35" font-size="7" fill="#444">Floor plan</text><text x="1671" y="801.1" font-size="7" font-weight="bold" fill="#222">Plan contents</text><text x="1754" y="801.1" font-size="7" fill="#444">Ground floor</text><text x="1671" y="820.45" font-size="7" font-weight="bold" fill="#222">Site owner</text><text x="1754" y="820.45" font-size="7" fill="#444">PlanRadar GmbH</text><text x="1671" y="839.75" font-size="7" font-weight="bold" fill="#222">Author</text><text x="1754" y="839.75" font-size="7" fill="#444">PlanRadar GmbH</text><text x="1671" y="858.5" font-size="7" font-weight="bold" fill="#222">Notes</text><text x="1677" y="638" font-size="14.5" font-weight="bold" fill="#1a1a1a" textLength="140" lengthAdjust="spacingAndGlyphs">EXAMPLE PROJECT</text><text x="1714" y="593.3" font-size="21" font-weight="bold" fill="#4a4a4a" textLength="97" lengthAdjust="spacingAndGlyphs">PlanRadar</text><defs><linearGradient id="tlg" gradientUnits="userSpaceOnUse" x1="0" y1="0" x2="0" y2="41"><stop offset="0" stop-color="#5d9fdc"/><stop offset="0.5" stop-color="#2a74c4"/><stop offset="1" stop-color="#1a5fb0"/></linearGradient><clipPath id="tlc"><rect width="42" height="41" rx="3"/></clipPath></defs><g transform="translate(1683 571) scale(0.68)"><g clip-path="url(#tlc)"><rect width="42" height="41" fill="url(#tlg)"/><ellipse cx="0" cy="0" rx="38.5" ry="49" fill="#fff"/><ellipse cx="0" cy="0" rx="36" ry="36.5" fill="url(#tlg)"/><ellipse cx="0" cy="0" rx="33" ry="31.3" fill="#fff"/><ellipse cx="0" cy="0" rx="30.9" ry="26.5" fill="url(#tlg)"/><ellipse cx="0" cy="0" rx="28.2" ry="22.8" fill="#fff"/><ellipse cx="0" cy="0" rx="25.5" ry="19" fill="url(#tlg)"/><ellipse cx="0" cy="0" rx="22.4" ry="15.8" fill="#fff"/><ellipse cx="0" cy="0" rx="19.7" ry="11.7" fill="url(#tlg)"/><ellipse cx="0" cy="0" rx="15.7" ry="9.4" fill="#fff"/><ellipse cx="0" cy="0" rx="12.8" ry="5.4" fill="url(#tlg)"/></g></g><path d="M1204.4 474.7 Q1226.4 465.2 1234.4 451.2 Q1230.4 445.2 1216.4 449.2Z" fill="#000" opacity="0.11"/><path d="M1204.4 474.7 L1189.985134730909 446.592676056338 A16.2 16.2 0 1 1 1218.8148652690911 446.592676056338Z" fill="#0a96f6"/><path d="M1204.4 474.7 L1189.985134730909 446.592676056338 A16.2 16.2 0 0 1 1204.4 423.0Z" fill="#0a82de"/><circle cx="1204.4" cy="439.2" r="10.4" fill="#ececec"/><path d="M1204.4 428.8 A10.4 10.4 0 0 1 1204.4 449.59999999999997Z" fill="#fff"/><circle cx="1204.4" cy="439.2" r="6.6" fill="#3a50c2"/><path d="M1308.4 780.8 Q1330.4 771.3 1338.4 757.3 Q1334.4 751.3 1320.4 755.3Z" fill="#000" opacity="0.11"/><path d="M1308.4 780.8 L1293.985134730909 752.692676056338 A16.2 16.2 0 1 1 1322.8148652690911 752.692676056338Z" fill="#0a96f6"/><path d="M1308.4 780.8 L1293.985134730909 752.692676056338 A16.2 16.2 0 0 1 1308.4 729.0999999999999Z" fill="#0a82de"/><circle cx="1308.4" cy="745.3" r="10.4" fill="#ececec"/><path d="M1308.4 734.9 A10.4 10.4 0 0 1 1308.4 755.6999999999999Z" fill="#fff"/><circle cx="1308.4" cy="745.3" r="6.6" fill="#e0430f"/><defs><radialGradient id="sphs" cx="0.5" cy="0.5" r="0.5"><stop offset="0.8" stop-color="#000" stop-opacity="0.10"/><stop offset="1" stop-color="#000" stop-opacity="0"/></radialGradient><clipPath id="sphc"><circle cx="1864" cy="895.25" r="31"/></clipPath><linearGradient id="lgsph" gradientUnits="userSpaceOnUse" x1="0" y1="864" x2="0" y2="926"><stop offset="0" stop-color="#7ab2e2"/><stop offset="0.45" stop-color="#2a7ccc"/><stop offset="1" stop-color="#0765c3"/></linearGradient></defs><circle cx="1864.5" cy="896" r="35" fill="url(#sphs)"/><g clip-path="url(#sphc)"><rect x="1830" y="860" width="70" height="70" fill="#fff"/><ellipse cx="1833" cy="864" rx="69" ry="78.5" fill="url(#lgsph)"/><ellipse cx="1833" cy="864" rx="63.7" ry="76.2" fill="#fff"/><ellipse cx="1833" cy="864" rx="57" ry="56.5" fill="url(#lgsph)"/><ellipse cx="1833" cy="864" rx="50.4" ry="50.4" fill="#fff"/><ellipse cx="1833" cy="864" rx="46" ry="41.9" fill="url(#lgsph)"/><ellipse cx="1833" cy="864" rx="41.1" ry="34.8" fill="#fff"/><ellipse cx="1833" cy="864" rx="37.6" ry="29.5" fill="url(#lgsph)"/><ellipse cx="1833" cy="864" rx="33.1" ry="23.3" fill="#fff"/><ellipse cx="1833" cy="864" rx="28.7" ry="18" fill="url(#lgsph)"/><ellipse cx="1833" cy="864" rx="24.3" ry="14.4" fill="#fff"/><ellipse cx="1833" cy="864" rx="16" ry="7.3" fill="url(#lgsph)"/><ellipse cx="1833" cy="864" rx="11" ry="3.7" fill="#fff"/></g></svg>
<div class="zb" style="left:778px"><svg class="abs" style="left:9px;top:11px" width="18" height="18"><path d="M9 1 V17 M1 9 H17" stroke="#111" stroke-width="3"/></svg></div>
<div class="zb" style="left:818px"><svg class="abs" style="left:9px;top:11px" width="18" height="18"><path d="M1 9 H17" stroke="#111" stroke-width="3"/></svg></div>
<div class="zb" style="left:873px"><svg class="abs" style="left:8px;top:9px" width="20" height="20" viewBox="0 0 20 20"><path d="M3 3 L17 17 M17 3 L3 17" stroke="#111" stroke-width="3"/><path d="M1 1 H8 L1 8Z M19 1 H12 L19 8Z M1 19 H8 L1 12Z M19 19 H12 L19 12Z" fill="#111"/></svg></div>
<div class="zb" style="left:927px"><svg class="abs" style="left:8px;top:9px" width="20" height="20" viewBox="0 0 20 20"><path d="M1.5 1.5 L7 7 M18.5 1.5 L13 7 M1.5 18.5 L7 13 M18.5 18.5 L13 13" stroke="#111" stroke-width="3" stroke-linecap="round"/><path d="M3 8.5 H8.5 V3Z M17 8.5 H11.5 V3Z M3 11.5 H8.5 V17Z M17 11.5 H11.5 V17Z" fill="#111"/></svg></div>
<div class="abs" style="left:752px;top:920px;width:20px;height:69px;background:#edf0f4;border:1px solid #c3cdd9;border-radius:0 8px 8px 0"><svg class="abs" style="left:0.5px;top:23.5px" width="14" height="18"><path d="M11 2 L4 9 L11 16" fill="none" stroke="#111" stroke-width="2.2"/></svg></div>

<div class="abs" style="left:568px;top:140px;width:202px;height:201px;background:#fff;border:1px solid #c6d0da;border-radius:4px;box-shadow:0 2px 10px rgba(0,0,0,0.18);overflow:hidden">
 <div class="abs" style="left:0;top:0;width:200px;height:50px;background:#d3e5f3"></div>
 <svg class="abs" style="left:18px;top:18px" width="20" height="18" viewBox="0 0 20 18"><path d="M0.8 7 L5.5 5.5 L5.5 14.9 L0.8 16.7Z M13.5 7 L18.3 5.2 L18.3 14.9 L13.5 16.7Z M7 7.5 L9.4 12 L12 7.5 L12 16.9 L7 15.2Z" fill="#111"/><path d="M9.4 11.4 L6.4 5.8 A3.5 3.5 0 1 1 12.4 5.8Z" fill="#111"/><circle cx="9.4" cy="4.3" r="1.1" fill="#d3e5f3"/></svg>
 <div class="abs" style="transform:translateX(0.15px) scaleX(0.9078);transform-origin:0 0;left:49px;top:15px;font-size:18px;line-height:20px;color:#222" id="t_ddplan">Plan</div>
 <div class="abs" style="left:0;top:100px;width:200px;height:50px"></div>
 <svg class="abs" style="left:18px;top:119px" width="20" height="18" viewBox="0 0 20 18"><path d="M1 2 V15 H17" fill="none" stroke="#c8c8c8" stroke-width="2"/><path d="M5 6 H8 M8 9 H12 M12 12 H16" stroke="#c8c8c8" stroke-width="2"/></svg>
 <div class="abs" style="transform:translateX(-0.85px) scaleX(0.9375);transform-origin:0 0;left:49px;top:115px;font-size:18px;line-height:20px;color:#c4c4c4" id="t_ddsch">Schedule</div>
 <svg class="abs" style="left:19px;top:166px" width="16" height="21" viewBox="0 0 16 21"><path d="M2 0 H10 L15 5 V19 Q15 20.5 13.5 20.5 H2 Q0.5 20.5 0.5 19 V1.5 Q0.5 0 2 0Z" fill="#111"/><path d="M10 0 V5 H15" fill="#fff" stroke="#fff" stroke-width="0.8"/></svg>
 <div class="abs" style="transform:translateX(0.14px) scaleX(0.9589);transform-origin:0 0;left:49px;top:165px;font-size:18px;line-height:20px;color:#222" id="t_dddocs">Documents</div>
</div>
<div class="abs" style="left:567px;top:190px;width:204px;height:53px;background:#f1f1f1;border:2px solid #f7941d">
 <svg class="abs" style="left:17px;top:17px" width="20" height="18" viewBox="0 0 20 18"><rect x="0" y="1" width="3" height="3" fill="#111"/><rect x="0" y="7" width="3" height="3" fill="#111"/><rect x="0" y="13" width="3" height="3" fill="#111"/><rect x="5" y="1.5" width="13" height="2.2" fill="#111"/><rect x="5" y="7.5" width="13" height="2.2" fill="#111"/><rect x="5" y="13.5" width="13" height="2.2" fill="#111"/></svg>
 <div class="abs" style="transform:translateX(0.16px) scaleX(0.9185);transform-origin:0 0;left:49px;top:13px;font-size:18px;line-height:20px;color:#222" id="t_ddlist">List</div>
 <div class="abs" style="left:85px;top:9px;width:30px;height:30px;border-radius:50%;background:#f7962e;color:#fff;font-size:16px;text-align:center;line-height:30px">2</div>
</div>

</body></html>
